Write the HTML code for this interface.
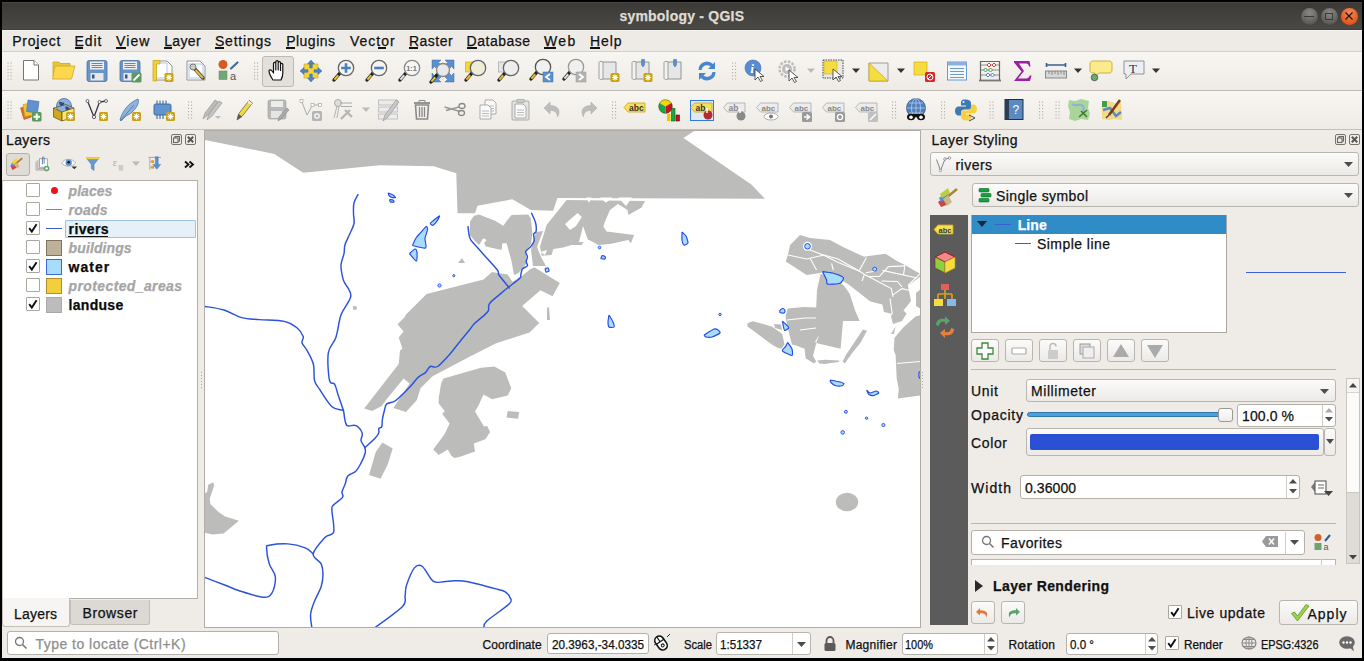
<!DOCTYPE html><html><head><meta charset="utf-8"><style>
*{margin:0;padding:0;box-sizing:border-box}
html,body{width:1364px;height:661px;overflow:hidden;background:#000}
body{position:relative;font-family:"Liberation Sans",sans-serif}
.a{position:absolute}
.t{position:absolute;white-space:nowrap;line-height:normal;font-family:"Liberation Sans",sans-serif;-webkit-text-stroke:0.25px currentColor}
svg{position:absolute;overflow:visible}
</style></head><body>
<div class="a" style="left:2px;top:2px;width:1360px;height:655px;background:#efebe7"></div>
<div class="a" style="left:2px;top:2px;width:1360px;height:28px;background:linear-gradient(#3a3935,#4c4a46)"></div>
<div class="a" style="left:2px;top:2px;width:1360px;height:1px;background:#4a4844"></div>
<div class="a" style="left:2px;top:29px;width:1360px;height:1px;background:#403e3a"></div>
<div class="t" style="left:619.4px;top:8.13px;font-size:14px;font-weight:bold;font-style:normal;color:#dfdbd2;letter-spacing:0.218px;">symbology - QGIS</div>
<div class="a" style="left:1300.5px;top:7.5px;width:17px;height:17px;border-radius:50%;background:radial-gradient(circle at 50% 30%,#8a8985,#5d5c58 70%,#4a4945);box-shadow:0 0 0 0.5px #3a3935"></div>
<div class="a" style="left:1320.5px;top:7.5px;width:17px;height:17px;border-radius:50%;background:radial-gradient(circle at 50% 30%,#8a8985,#5d5c58 70%,#4a4945);box-shadow:0 0 0 0.5px #3a3935"></div>
<div class="a" style="left:1340.5px;top:7.5px;width:17px;height:17px;border-radius:50%;background:radial-gradient(circle at 50% 30%,#f08a5d,#e3581c 70%,#d44d12);box-shadow:0 0 0 0.5px #8d3a14"></div>
<div class="a" style="left:1304px;top:15.5px;width:10px;height:1.6px;background:#3b3a36"></div>
<div class="a" style="left:1325px;top:13px;width:8px;height:6.5px;border:1.5px solid #3b3a36"></div>
<svg style="left:1343px;top:10px" width="12" height="12"><path d="M2.5 2.5L9.5 9.5M9.5 2.5L2.5 9.5" stroke="#2a1505" stroke-width="1.2"/></svg>
<div class="a" style="left:2px;top:30px;width:1360px;height:21px;background:#eeebe7"></div>
<div class="a" style="left:2px;top:30px;width:1360px;height:1px;background:#f7f5f1"></div>
<div class="a" style="left:2px;top:51px;width:1360px;height:1px;background:#d3cfc9"></div>
<div class="t" style="left:12.2px;top:32.83px;font-size:14px;font-weight:normal;font-style:normal;color:#111;letter-spacing:0.790px;">Project</div>
<div class="t" style="left:74.6px;top:32.83px;font-size:14px;font-weight:normal;font-style:normal;color:#111;letter-spacing:0.892px;">Edit</div>
<div class="t" style="left:116px;top:32.83px;font-size:14px;font-weight:normal;font-style:normal;color:#111;letter-spacing:1.102px;">View</div>
<div class="t" style="left:164.2px;top:32.83px;font-size:14px;font-weight:normal;font-style:normal;color:#111;letter-spacing:0.350px;">Layer</div>
<div class="t" style="left:215px;top:32.83px;font-size:14px;font-weight:normal;font-style:normal;color:#111;letter-spacing:0.775px;">Settings</div>
<div class="t" style="left:286.2px;top:32.83px;font-size:14px;font-weight:normal;font-style:normal;color:#111;letter-spacing:0.482px;">Plugins</div>
<div class="t" style="left:350px;top:32.83px;font-size:14px;font-weight:normal;font-style:normal;color:#111;letter-spacing:0.983px;">Vector</div>
<div class="t" style="left:409px;top:32.83px;font-size:14px;font-weight:normal;font-style:normal;color:#111;letter-spacing:0.476px;">Raster</div>
<div class="t" style="left:466.6px;top:32.83px;font-size:14px;font-weight:normal;font-style:normal;color:#111;letter-spacing:0.499px;">Database</div>
<div class="t" style="left:544px;top:32.83px;font-size:14px;font-weight:normal;font-style:normal;color:#111;letter-spacing:1.384px;">Web</div>
<div class="t" style="left:590px;top:32.83px;font-size:14px;font-weight:normal;font-style:normal;color:#111;letter-spacing:0.906px;">Help</div>
<div class="a" style="left:35.2px;top:47.2px;width:3.8px;height:1.5px;background:#111"></div>
<div class="a" style="left:75px;top:47.2px;width:8px;height:1.5px;background:#111"></div>
<div class="a" style="left:116px;top:47.2px;width:10px;height:1.5px;background:#111"></div>
<div class="a" style="left:164.2px;top:47.2px;width:8px;height:1.5px;background:#111"></div>
<div class="a" style="left:215px;top:47.2px;width:9px;height:1.5px;background:#111"></div>
<div class="a" style="left:286.2px;top:47.2px;width:9px;height:1.5px;background:#111"></div>
<div class="a" style="left:378px;top:47.2px;width:8px;height:1.5px;background:#111"></div>
<div class="a" style="left:409px;top:47.2px;width:9px;height:1.5px;background:#111"></div>
<div class="a" style="left:466.6px;top:47.2px;width:10px;height:1.5px;background:#111"></div>
<div class="a" style="left:544px;top:47.2px;width:12px;height:1.5px;background:#111"></div>
<div class="a" style="left:590px;top:47.2px;width:10px;height:1.5px;background:#111"></div>
<div class="a" style="left:2px;top:52px;width:1360px;height:38px;background:linear-gradient(#f8f6f2,#eeebe6)"></div>
<div class="a" style="left:2px;top:90px;width:1360px;height:1px;background:#bdb9b3"></div>
<div class="a" style="left:2px;top:91px;width:1360px;height:38px;background:linear-gradient(#f8f6f2,#eeebe6)"></div>
<div class="a" style="left:2px;top:129px;width:1360px;height:1px;background:#c2beb8"></div>
<div class="a" style="left:2px;top:130px;width:1360px;height:497px;background:#efebe7"></div>
<div class="a" style="left:2px;top:627px;width:1360px;height:31px;background:#efebe7"></div>
<div class="t" style="left:6px;top:132.33px;font-size:14px;font-weight:normal;font-style:normal;color:#111;letter-spacing:0.400px;">Layers</div>
<div class="a" style="left:171px;top:133.9px;width:11px;height:11px;border:1px solid #77736d;border-radius:2px"></div><svg style="left:171px;top:133.9px" width="11" height="11"><rect x="4" y="2.5" width="4.5" height="4.5" fill="none" stroke="#666" stroke-width="1.1"/><rect x="2.5" y="4" width="4.5" height="4.5" fill="#efebe7" stroke="#666" stroke-width="1.1"/></svg><div class="a" style="left:185px;top:133.9px;width:11px;height:11px;border:1px solid #77736d;border-radius:2px"></div><svg style="left:185px;top:133.9px" width="11" height="11"><path d="M2.8 2.8L8.2 8.2M8.2 2.8L2.8 8.2" stroke="#555" stroke-width="2"/></svg>
<div class="a" style="left:6px;top:153px;width:23.5px;height:22.5px;border:1px solid #b3afa9;border-radius:3px;background:#dfdcd8"></div>
<div class="a" style="left:2px;top:180px;width:196px;height:419px;background:#fff;border:1px solid #b3afa9;border-left-color:#c5c1bb"></div>
<div class="a" style="left:26px;top:183px;width:14px;height:14px;border:1px solid #aaa6a0;background:#fff;border-radius:1px"></div>
<div class="a" style="left:50.5px;top:186.5px;width:7px;height:7px;background:#e8141c;border-radius:50%"></div>
<div class="t" style="left:68.6px;top:183.13px;font-size:14px;font-weight:bold;font-style:italic;color:#a5a5a5;letter-spacing:0.028px;">places</div>
<div class="a" style="left:26px;top:202px;width:14px;height:14px;border:1px solid #aaa6a0;background:#fff;border-radius:1px"></div>
<div class="a" style="left:46px;top:208.5px;width:16px;height:1.2px;background:#e36262"></div>
<div class="t" style="left:68.6px;top:202.13px;font-size:14px;font-weight:bold;font-style:italic;color:#a5a5a5;letter-spacing:0.223px;">roads</div>
<div class="a" style="left:65.4px;top:219.5px;width:131px;height:18px;background:#e6f0f9;border:1px solid #9fc1e3;border-radius:1px"></div>
<div class="a" style="left:26px;top:221px;width:14px;height:14px;border:1px solid #aaa6a0;background:#fff;border-radius:1px"></div><svg style="left:26px;top:221px" width="14" height="14"><path d="M3.2 7.2L5.8 10.6L10.6 3.2" stroke="#111" stroke-width="1.9" fill="none"/></svg>
<div class="a" style="left:46px;top:227.5px;width:16px;height:1.3px;background:#3d5fd3"></div>
<div class="t" style="left:68.6px;top:221.13px;font-size:14px;font-weight:bold;font-style:normal;color:#0a0a0a;letter-spacing:0.372px;">rivers</div>
<div class="a" style="left:26px;top:240px;width:14px;height:14px;border:1px solid #aaa6a0;background:#fff;border-radius:1px"></div>
<div class="a" style="left:46px;top:239.5px;width:16px;height:16px;background:#bdb19a;border:1px solid #7d735f"></div>
<div class="t" style="left:68.6px;top:240.13px;font-size:14px;font-weight:bold;font-style:italic;color:#a5a5a5;letter-spacing:0.102px;">buildings</div>
<div class="a" style="left:26px;top:259px;width:14px;height:14px;border:1px solid #aaa6a0;background:#fff;border-radius:1px"></div><svg style="left:26px;top:259px" width="14" height="14"><path d="M3.2 7.2L5.8 10.6L10.6 3.2" stroke="#111" stroke-width="1.9" fill="none"/></svg>
<div class="a" style="left:46px;top:258.5px;width:16px;height:16px;background:#a8dcfb;border:1px solid #3a6ad8"></div>
<div class="t" style="left:68.6px;top:259.13px;font-size:14px;font-weight:bold;font-style:normal;color:#0a0a0a;letter-spacing:0.984px;">water</div>
<div class="a" style="left:26px;top:278px;width:14px;height:14px;border:1px solid #aaa6a0;background:#fff;border-radius:1px"></div>
<div class="a" style="left:46px;top:277.5px;width:16px;height:16px;background:#f3cf3b;border:1px solid #b1902a"></div>
<div class="t" style="left:68.6px;top:278.13px;font-size:14px;font-weight:bold;font-style:italic;color:#a5a5a5;letter-spacing:0.378px;">protected_areas</div>
<div class="a" style="left:26px;top:297px;width:14px;height:14px;border:1px solid #aaa6a0;background:#fff;border-radius:1px"></div><svg style="left:26px;top:297px" width="14" height="14"><path d="M3.2 7.2L5.8 10.6L10.6 3.2" stroke="#111" stroke-width="1.9" fill="none"/></svg>
<div class="a" style="left:46px;top:296.5px;width:16px;height:16px;background:#bbbcbb;border:1px solid #a9aaa9"></div>
<div class="t" style="left:68.6px;top:297.13px;font-size:14px;font-weight:bold;font-style:normal;color:#0a0a0a;letter-spacing:0.288px;">landuse</div>
<div class="a" style="left:68.3px;top:235.5px;width:40px;height:1.4px;background:#111"></div>
<div class="a" style="left:2px;top:598px;width:68px;height:29px;background:#f6f5f3;border:1px solid #c2beb8;border-top:none;border-radius:0 0 3px 3px"></div>
<div class="t" style="left:14px;top:605.83px;font-size:14px;font-weight:normal;font-style:normal;color:#111;letter-spacing:0.200px;">Layers</div>
<div class="a" style="left:70px;top:599.5px;width:80px;height:25px;background:#dcd9d5;border:1px solid #c2beb8;border-top:none;border-radius:0 0 3px 3px"></div>
<div class="t" style="left:82.5px;top:605.33px;font-size:14px;font-weight:normal;font-style:normal;color:#111;letter-spacing:0.612px;">Browser</div>
<div class="a" style="left:920px;top:130px;width:1px;height:497px;background:#b3afa9"></div>
<div class="t" style="left:931.6px;top:132.03px;font-size:14px;font-weight:normal;font-style:normal;color:#111;letter-spacing:0.424px;">Layer Styling</div>
<div class="a" style="left:1335.4px;top:133.9px;width:11px;height:11px;border:1px solid #77736d;border-radius:2px"></div><svg style="left:1335.4px;top:133.9px" width="11" height="11"><rect x="4" y="2.5" width="4.5" height="4.5" fill="none" stroke="#666" stroke-width="1.1"/><rect x="2.5" y="4" width="4.5" height="4.5" fill="#efebe7" stroke="#666" stroke-width="1.1"/></svg><div class="a" style="left:1349.4px;top:133.9px;width:11px;height:11px;border:1px solid #77736d;border-radius:2px"></div><svg style="left:1349.4px;top:133.9px" width="11" height="11"><path d="M2.8 2.8L8.2 8.2M8.2 2.8L2.8 8.2" stroke="#555" stroke-width="2"/></svg>
<div class="a" style="left:930px;top:152.2px;width:429px;height:24.2px;border:1px solid #b9b5af;border-radius:3px;background:linear-gradient(#fbfbfa,#eceae7);"></div>
<div class="t" style="left:955.5px;top:157.13px;font-size:14px;font-weight:normal;font-style:normal;color:#111;letter-spacing:0.459px;">rivers</div>
<svg style="left:935px;top:156px" width="17" height="17"><path d="M1.5 3.5L5.5 14.5L10 3L14.5 2" fill="none" stroke="#777" stroke-width="0.9"/><circle cx="10" cy="3" r="1.3" fill="#fff" stroke="#777" stroke-width="0.7"/><circle cx="14.5" cy="2" r="1.3" fill="#fff" stroke="#777" stroke-width="0.7"/><circle cx="5.5" cy="14.5" r="1.2" fill="#fff" stroke="#777" stroke-width="0.7"/></svg>
<svg style="left:1343.5px;top:162.0px" width="9" height="5"><path d="M0 0H9L4.5 5Z" fill="#4d4d4d"/></svg>
<div class="a" style="left:971.6px;top:183.3px;width:387.4px;height:24.2px;border:1px solid #b9b5af;border-radius:3px;background:linear-gradient(#fbfbfa,#eceae7);"></div>
<div class="t" style="left:996px;top:187.83px;font-size:14px;font-weight:normal;font-style:normal;color:#111;letter-spacing:0.406px;">Single symbol</div>
<svg style="left:978px;top:188px" width="14" height="15"><rect x="1" y="0.5" width="10" height="3.5" rx="0.8" fill="#18a040" stroke="#0b6a28" stroke-width="0.6"/><rect x="3" y="5.5" width="10" height="3.5" rx="0.8" fill="#18a040" stroke="#0b6a28" stroke-width="0.6"/><rect x="1" y="10.5" width="10" height="3.5" rx="0.8" fill="#18a040" stroke="#0b6a28" stroke-width="0.6"/></svg>
<svg style="left:1343.5px;top:193.0px" width="9" height="5"><path d="M0 0H9L4.5 5Z" fill="#4d4d4d"/></svg>
<div class="a" style="left:930px;top:215px;width:38px;height:409.5px;background:#5b5b5b"></div>
<div class="a" style="left:971.4px;top:215px;width:256px;height:118px;background:#fff;border:1px solid #aba7a1"></div>
<div class="a" style="left:972.4px;top:214.8px;width:254px;height:19.2px;background:#308cc6"></div>
<svg style="left:977px;top:221px" width="10" height="7"><path d="M0 0H10L5 6Z" fill="#15283a"/></svg>
<div class="a" style="left:995px;top:223.8px;width:16px;height:1.2px;background:#3d5fd3"></div>
<div class="t" style="left:1017.7px;top:216.83px;font-size:14px;font-weight:bold;font-style:normal;color:#fff;letter-spacing:0.078px;">Line</div>
<div class="a" style="left:1015px;top:243px;width:16px;height:1.3px;background:#3d5fd3"></div>
<div class="t" style="left:1037px;top:235.83px;font-size:14px;font-weight:normal;font-style:normal;color:#111;letter-spacing:0.455px;">Simple line</div>
<div class="a" style="left:1246px;top:272px;width:100px;height:1.4px;background:#3d5fd3"></div>
<div class="a" style="left:971.2px;top:339.2px;width:28px;height:23.2px;border:1px solid #b9b5af;border-radius:3px;background:linear-gradient(#fbfbfa,#eceae7);"></div>
<div class="a" style="left:1005.2px;top:339.2px;width:28px;height:23.2px;border:1px solid #b9b5af;border-radius:3px;background:linear-gradient(#fbfbfa,#eceae7);"></div>
<div class="a" style="left:1039.2px;top:339.2px;width:28px;height:23.2px;border:1px solid #b9b5af;border-radius:3px;background:linear-gradient(#fbfbfa,#eceae7);"></div>
<div class="a" style="left:1073.2px;top:339.2px;width:28px;height:23.2px;border:1px solid #b9b5af;border-radius:3px;background:linear-gradient(#fbfbfa,#eceae7);"></div>
<div class="a" style="left:1107.2px;top:339.2px;width:28px;height:23.2px;border:1px solid #b9b5af;border-radius:3px;background:linear-gradient(#fbfbfa,#eceae7);"></div>
<div class="a" style="left:1141.2px;top:339.2px;width:28px;height:23.2px;border:1px solid #b9b5af;border-radius:3px;background:linear-gradient(#fbfbfa,#eceae7);"></div>
<div class="a" style="left:971px;top:369px;width:365px;height:1px;background:#b9b5af"></div>
<div class="t" style="left:971px;top:383.33px;font-size:14px;font-weight:normal;font-style:normal;color:#111;letter-spacing:0.703px;">Unit</div>
<div class="a" style="left:1025.5px;top:378.5px;width:310px;height:23.7px;border:1px solid #b9b5af;border-radius:3px;background:linear-gradient(#fbfbfa,#eceae7);"></div>
<div class="t" style="left:1031px;top:383.33px;font-size:14px;font-weight:normal;font-style:normal;color:#111;letter-spacing:0.571px;">Millimeter</div>
<svg style="left:1320.0px;top:388.5px" width="9" height="5"><path d="M0 0H9L4.5 5Z" fill="#4d4d4d"/></svg>
<div class="t" style="left:971px;top:407.33px;font-size:14px;font-weight:normal;font-style:normal;color:#111;letter-spacing:0.758px;">Opacity</div>
<div class="a" style="left:1027px;top:412.3px;width:198px;height:5px;background:#4ca0d9;border:1px solid #3377aa;border-radius:3px"></div>
<div class="a" style="left:1217.5px;top:407.5px;width:15px;height:14px;background:linear-gradient(#fff,#ececec);border:1px solid #9c9893;border-radius:3px"></div>
<div class="a" style="left:1236.5px;top:404.3px;width:99px;height:22.3px;border:1px solid #b4b0aa;border-radius:3px;background:#fff;"></div>
<div class="t" style="left:1242px;top:407.83px;font-size:14px;font-weight:normal;font-style:normal;color:#111;letter-spacing:0.107px;">100.0 %</div>
<div class="a" style="left:1321.5px;top:405.3px;width:1px;height:20.3px;background:#d0ccc6"></div>
<svg style="left:1324.5px;top:408.25px" width="8" height="4.5"><path d="M0 4.5H8L4.0 0Z" fill="#aaa"/></svg>
<svg style="left:1324.5px;top:417.25px" width="8" height="4.5"><path d="M0 0H8L4.0 4.5Z" fill="#4d4d4d"/></svg>
<div class="t" style="left:971px;top:435.33px;font-size:14px;font-weight:normal;font-style:normal;color:#111;letter-spacing:0.641px;">Color</div>
<div class="a" style="left:1025.5px;top:428.3px;width:298px;height:27.5px;border:1px solid #b9b5af;border-radius:3px;background:linear-gradient(#fbfbfa,#eceae7);"></div>
<div class="a" style="left:1030px;top:433.6px;width:289px;height:16.4px;background:#2b50d3;border-radius:2px"></div>
<div class="a" style="left:1324px;top:428.3px;width:11.5px;height:27.5px;border:1px solid #b9b5af;border-radius:3px;background:linear-gradient(#fbfbfa,#eceae7);"></div>
<svg style="left:1325.5px;top:439.0px" width="8" height="5"><path d="M0 0H8L4.0 5Z" fill="#4d4d4d"/></svg>
<div class="t" style="left:971px;top:480.33px;font-size:14px;font-weight:normal;font-style:normal;color:#111;letter-spacing:1.055px;">Width</div>
<div class="a" style="left:1019.5px;top:475.3px;width:280px;height:23.3px;border:1px solid #b4b0aa;border-radius:3px;background:#fff;"></div>
<div class="t" style="left:1025px;top:480.33px;font-size:14px;font-weight:normal;font-style:normal;color:#111;letter-spacing:0.070px;">0.36000</div>
<div class="a" style="left:1285.5px;top:476.3px;width:1px;height:21.3px;background:#d0ccc6"></div>
<svg style="left:1288.5px;top:479.25px" width="8" height="4.5"><path d="M0 4.5H8L4.0 0Z" fill="#4d4d4d"/></svg>
<svg style="left:1288.5px;top:489.25px" width="8" height="4.5"><path d="M0 0H8L4.0 4.5Z" fill="#4d4d4d"/></svg>
<svg style="left:1309px;top:478px" width="26" height="20"><path d="M2 9L6 4V14Z" fill="#777"/><rect x="6" y="3" width="11" height="13" fill="#fff" stroke="#666" stroke-width="1.2"/><path d="M9 7H15M9 10H15" stroke="#666" stroke-width="1.2"/><path d="M15 13H24L19.5 18Z" fill="#444"/></svg>
<div class="a" style="left:1345.5px;top:378px;width:14px;height:186px;background:#dfdcd8;border:1px solid #c9c5bf"></div>
<div class="a" style="left:1346.5px;top:379px;width:12px;height:14px;background:#f6f5f3"></div>
<div class="a" style="left:1346.5px;top:392px;width:12px;height:101px;background:#fbfbfa;border-top:1px solid #d8d4ce;border-bottom:1px solid #c9c5bf"></div>
<svg style="left:1348.5px;top:382.75px" width="8" height="4.5"><path d="M0 4.5H8L4.0 0Z" fill="#444"/></svg>
<svg style="left:1348.5px;top:554.75px" width="8" height="4.5"><path d="M0 0H8L4.0 4.5Z" fill="#444"/></svg>
<div class="a" style="left:971px;top:522.8px;width:365px;height:1px;background:#b9b5af"></div>
<div class="a" style="left:971px;top:530px;width:334.2px;height:24.5px;border:1px solid #b4b0aa;border-radius:3px;background:#fff;"></div>
<svg style="left:981px;top:535px" width="14" height="14"><circle cx="5.5" cy="5.5" r="4" fill="none" stroke="#777" stroke-width="1.3"/><path d="M8.5 8.5L12.5 12.5" stroke="#777" stroke-width="1.6"/></svg>
<div class="t" style="left:1001px;top:534.83px;font-size:14px;font-weight:normal;font-style:normal;color:#111;letter-spacing:0.432px;">Favorites</div>
<svg style="left:1262px;top:536px" width="16" height="11"><path d="M0 5.5L4 0H16V11H4Z" fill="#9a9a9a"/><path d="M7 2.5L12 8.5M12 2.5L7 8.5" stroke="#fff" stroke-width="1.4"/></svg>
<div class="a" style="left:1285.2px;top:531.5px;width:1px;height:22px;background:#d0ccc6"></div>
<svg style="left:1290.0px;top:540.0px" width="9" height="5"><path d="M0 0H9L4.5 5Z" fill="#4d4d4d"/></svg>
<svg style="left:1313px;top:533px" width="20" height="20"><circle cx="5" cy="4.5" r="3.5" fill="#d0622a"/><rect x="1.5" y="10" width="7" height="7" fill="#6fa372"/><path d="M12 8L17 2" stroke="#2e5d96" stroke-width="2"/><text x="10.5" y="17" font-size="9" fill="#555" font-family="Liberation Sans">a</text></svg>
<div class="a" style="left:971px;top:559px;width:365px;height:6px;background:#fff;border:1px solid #b9b5af;border-bottom:none"></div>
<div class="a" style="left:1321px;top:559px;width:1px;height:6px;background:#ccc"></div>
<svg style="left:975px;top:579.5px" width="9" height="12"><path d="M0 0L8 6L0 12Z" fill="#2a2a2a"/></svg>
<div class="t" style="left:993px;top:578.33px;font-size:14px;font-weight:bold;font-style:normal;color:#111;letter-spacing:0.397px;">Layer Rendering</div>
<div class="a" style="left:971px;top:601px;width:23.5px;height:22.5px;border:1px solid #b9b5af;border-radius:3px;background:linear-gradient(#fbfbfa,#eceae7);"></div>
<svg style="left:975px;top:605px" width="16" height="15"><path d="M5 3L1 7L5 10.5V8.2C9 7.8 11 9 11.5 12.5C13.5 8 11.5 5 5 5.2Z" fill="#e07a3a"/></svg>
<div class="a" style="left:1001px;top:601px;width:23.5px;height:22.5px;border:1px solid #b9b5af;border-radius:3px;background:linear-gradient(#fbfbfa,#eceae7);"></div>
<svg style="left:1005px;top:605px" width="16" height="15"><path d="M11 3L15 7L11 10.5V8.2C7 7.8 5 9 4.5 12.5C2.5 8 4.5 5 11 5.2Z" fill="#5aa36a"/></svg>
<div class="a" style="left:1168.2px;top:605.3px;width:14px;height:14px;border:1px solid #aaa6a0;background:#fff;border-radius:1px"></div><svg style="left:1168.2px;top:605.3px" width="14" height="14"><path d="M3.2 7.2L5.8 10.6L10.6 3.2" stroke="#111" stroke-width="1.9" fill="none"/></svg>
<div class="t" style="left:1187px;top:605.13px;font-size:14px;font-weight:normal;font-style:normal;color:#111;letter-spacing:0.564px;">Live update</div>
<div class="a" style="left:1279.3px;top:600.3px;width:79px;height:24.8px;border:1px solid #b9b5af;border-radius:3px;background:linear-gradient(#fbfbfa,#eceae7);"></div>
<svg style="left:1290px;top:603px" width="20" height="19"><path d="M1.5 10.5L4.5 9L7.5 13L16 1.5L19 3L7.5 18Z" fill="#9fd04a" stroke="#5a9a2a" stroke-width="0.8"/></svg>
<div class="t" style="left:1307.5px;top:605.63px;font-size:14px;font-weight:normal;font-style:normal;color:#111;letter-spacing:0.996px;">Apply</div>
<div class="a" style="left:200.8px;top:372px;width:1.2px;height:1.2px;background:#9a9690;border-radius:50%"></div>
<div class="a" style="left:921.8px;top:372px;width:1.2px;height:1.2px;background:#9a9690;border-radius:50%"></div>
<div class="a" style="left:200.8px;top:375px;width:1.2px;height:1.2px;background:#9a9690;border-radius:50%"></div>
<div class="a" style="left:921.8px;top:375px;width:1.2px;height:1.2px;background:#9a9690;border-radius:50%"></div>
<div class="a" style="left:200.8px;top:378px;width:1.2px;height:1.2px;background:#9a9690;border-radius:50%"></div>
<div class="a" style="left:921.8px;top:378px;width:1.2px;height:1.2px;background:#9a9690;border-radius:50%"></div>
<div class="a" style="left:200.8px;top:381px;width:1.2px;height:1.2px;background:#9a9690;border-radius:50%"></div>
<div class="a" style="left:921.8px;top:381px;width:1.2px;height:1.2px;background:#9a9690;border-radius:50%"></div>
<div class="a" style="left:200.8px;top:384px;width:1.2px;height:1.2px;background:#9a9690;border-radius:50%"></div>
<div class="a" style="left:921.8px;top:384px;width:1.2px;height:1.2px;background:#9a9690;border-radius:50%"></div>
<div class="a" style="left:200.8px;top:387px;width:1.2px;height:1.2px;background:#9a9690;border-radius:50%"></div>
<div class="a" style="left:921.8px;top:387px;width:1.2px;height:1.2px;background:#9a9690;border-radius:50%"></div>
<div class="a" style="left:6.6px;top:631.4px;width:272px;height:24px;border:1px solid #b4b0aa;border-radius:3px;background:#fff;"></div>
<svg style="left:14px;top:636px" width="14" height="14"><circle cx="5.5" cy="5.5" r="4" fill="none" stroke="#777" stroke-width="1.3"/><path d="M8.5 8.5L12.5 12.5" stroke="#777" stroke-width="1.6"/></svg>
<div class="t" style="left:35.5px;top:635.83px;font-size:14px;font-weight:normal;font-style:normal;color:#8e8e8e;letter-spacing:0.472px;">Type to locate (Ctrl+K)</div>
<div class="t" style="left:482.6px;top:637.94px;font-size:12px;font-weight:normal;font-style:normal;color:#111;letter-spacing:0.033px;">Coordinate</div>
<div class="a" style="left:546.7px;top:632.6px;width:102.3px;height:21.4px;border:1px solid #b4b0aa;border-radius:3px;background:#fff;"></div>
<div class="t" style="left:551.5px;top:637.94px;font-size:12px;font-weight:normal;font-style:normal;color:#111;letter-spacing:0.000px;transform:scaleX(0.9782);transform-origin:0 0;">20.3963,-34.0335</div>
<svg style="left:652px;top:633px" width="20" height="20"><g transform="rotate(-35 9 10)"><rect x="4.5" y="2.5" width="9" height="15" rx="4.5" fill="#fff" stroke="#111" stroke-width="1.6"/><path d="M9 3V8M4.5 8.5H13.5" stroke="#111" stroke-width="1.2"/><circle cx="9" cy="13" r="1.5" fill="none" stroke="#111" stroke-width="1"/></g><path d="M15 4L18 1M2 12L4 11" stroke="#333" stroke-width="1"/></svg>
<div class="t" style="left:683.5px;top:637.94px;font-size:12px;font-weight:normal;font-style:normal;color:#111;letter-spacing:0.000px;transform:scaleX(0.9328);transform-origin:0 0;">Scale</div>
<div class="a" style="left:715.5px;top:632.2px;width:95.8px;height:22.8px;border:1px solid #b9b5af;border-radius:3px;background:linear-gradient(#fbfbfa,#eceae7);background:#fff"></div>
<div class="a" style="left:791.6px;top:633.2px;width:1px;height:20.8px;background:#d0ccc6"></div>
<div class="t" style="left:720px;top:637.94px;font-size:12px;font-weight:normal;font-style:normal;color:#111;letter-spacing:0.000px;transform:scaleX(0.9686);transform-origin:0 0;">1:51337</div>
<svg style="left:796.5px;top:641.5px" width="9" height="5"><path d="M0 0H9L4.5 5Z" fill="#4d4d4d"/></svg>
<svg style="left:823px;top:635px" width="14" height="17"><path d="M3.5 8V5.5A3.5 3.5 0 0 1 10.5 5.5V8" fill="none" stroke="#5a5a5a" stroke-width="1.8"/><rect x="1.5" y="8" width="11" height="8" rx="1.5" fill="#5a5a5a"/></svg>
<div class="t" style="left:845.4px;top:637.94px;font-size:12px;font-weight:normal;font-style:normal;color:#111;letter-spacing:0.280px;">Magnifier</div>
<div class="a" style="left:901.5px;top:632.6px;width:96.8px;height:22px;border:1px solid #b4b0aa;border-radius:3px;background:#fff;"></div>
<div class="t" style="left:905px;top:637.94px;font-size:12px;font-weight:normal;font-style:normal;color:#111;letter-spacing:0.000px;transform:scaleX(0.9124);transform-origin:0 0;">100%</div>
<div class="a" style="left:984.3px;top:633.6px;width:1px;height:20px;background:#d0ccc6"></div>
<svg style="left:987.0px;top:636.75px" width="8" height="4.5"><path d="M0 4.5H8L4.0 0Z" fill="#4d4d4d"/></svg>
<svg style="left:987.0px;top:645.75px" width="8" height="4.5"><path d="M0 0H8L4.0 4.5Z" fill="#4d4d4d"/></svg>
<div class="t" style="left:1008.4px;top:637.94px;font-size:12px;font-weight:normal;font-style:normal;color:#111;letter-spacing:0.273px;">Rotation</div>
<div class="a" style="left:1065.7px;top:632.6px;width:92.3px;height:22px;border:1px solid #b4b0aa;border-radius:3px;background:#fff;"></div>
<div class="t" style="left:1070px;top:637.64px;font-size:12px;font-weight:normal;font-style:normal;color:#111;letter-spacing:0.000px;transform:scaleX(0.9679);transform-origin:0 0;">0.0 °</div>
<div class="a" style="left:1144.6px;top:633.6px;width:1px;height:20px;background:#d0ccc6"></div>
<svg style="left:1147.5px;top:636.75px" width="8" height="4.5"><path d="M0 4.5H8L4.0 0Z" fill="#4d4d4d"/></svg>
<svg style="left:1147.5px;top:645.75px" width="8" height="4.5"><path d="M0 0H8L4.0 4.5Z" fill="#4d4d4d"/></svg>
<div class="a" style="left:1165.2px;top:636.2px;width:14px;height:14px;border:1px solid #aaa6a0;background:#fff;border-radius:1px"></div><svg style="left:1165.2px;top:636.2px" width="14" height="14"><path d="M3.2 7.2L5.8 10.6L10.6 3.2" stroke="#111" stroke-width="1.9" fill="none"/></svg>
<div class="t" style="left:1184.4px;top:637.64px;font-size:12px;font-weight:normal;font-style:normal;color:#111;letter-spacing:0.000px;transform:scaleX(0.9807);transform-origin:0 0;">Render</div>
<svg style="left:1241px;top:636px" width="16" height="14"><ellipse cx="8" cy="7" rx="7" ry="6" fill="none" stroke="#8a8a8a" stroke-width="1.2"/><path d="M1 7H15M8 1V13M3 3.5H13M3 10.5H13" stroke="#8a8a8a" stroke-width="1"/><ellipse cx="8" cy="7" rx="3" ry="6" fill="none" stroke="#8a8a8a" stroke-width="1"/></svg>
<div class="t" style="left:1261.4px;top:637.64px;font-size:12px;font-weight:normal;font-style:normal;color:#111;letter-spacing:0.000px;transform:scaleX(0.9062);transform-origin:0 0;">EPSG:4326</div>
<svg style="left:1339px;top:636px" width="17" height="16"><ellipse cx="8" cy="6.5" rx="7.8" ry="6.3" fill="#6a6a6a"/><path d="M10 11L15 15.5L13.5 9Z" fill="#6a6a6a"/><circle cx="4.5" cy="6.5" r="1.2" fill="#fff"/><circle cx="8" cy="6.5" r="1.2" fill="#fff"/><circle cx="11.5" cy="6.5" r="1.2" fill="#fff"/></svg>
<svg style="left:0;top:0" width="1364" height="140"><rect x="7.5" y="62.5" width="1.1" height="1.1" fill="#aeaaa4"/><rect x="10.5" y="62.5" width="1.1" height="1.1" fill="#aeaaa4"/><rect x="7.5" y="65.7" width="1.1" height="1.1" fill="#aeaaa4"/><rect x="10.5" y="65.7" width="1.1" height="1.1" fill="#aeaaa4"/><rect x="7.5" y="68.9" width="1.1" height="1.1" fill="#aeaaa4"/><rect x="10.5" y="68.9" width="1.1" height="1.1" fill="#aeaaa4"/><rect x="7.5" y="72.1" width="1.1" height="1.1" fill="#aeaaa4"/><rect x="10.5" y="72.1" width="1.1" height="1.1" fill="#aeaaa4"/><rect x="7.5" y="75.3" width="1.1" height="1.1" fill="#aeaaa4"/><rect x="10.5" y="75.3" width="1.1" height="1.1" fill="#aeaaa4"/><rect x="7.5" y="78.5" width="1.1" height="1.1" fill="#aeaaa4"/><rect x="10.5" y="78.5" width="1.1" height="1.1" fill="#aeaaa4"/></svg>
<svg style="left:0;top:0" width="1364" height="140"><rect x="7.5" y="101.5" width="1.1" height="1.1" fill="#aeaaa4"/><rect x="10.5" y="101.5" width="1.1" height="1.1" fill="#aeaaa4"/><rect x="7.5" y="104.7" width="1.1" height="1.1" fill="#aeaaa4"/><rect x="10.5" y="104.7" width="1.1" height="1.1" fill="#aeaaa4"/><rect x="7.5" y="107.9" width="1.1" height="1.1" fill="#aeaaa4"/><rect x="10.5" y="107.9" width="1.1" height="1.1" fill="#aeaaa4"/><rect x="7.5" y="111.1" width="1.1" height="1.1" fill="#aeaaa4"/><rect x="10.5" y="111.1" width="1.1" height="1.1" fill="#aeaaa4"/><rect x="7.5" y="114.3" width="1.1" height="1.1" fill="#aeaaa4"/><rect x="10.5" y="114.3" width="1.1" height="1.1" fill="#aeaaa4"/><rect x="7.5" y="117.5" width="1.1" height="1.1" fill="#aeaaa4"/><rect x="10.5" y="117.5" width="1.1" height="1.1" fill="#aeaaa4"/></svg>
<svg style="left:19.0px;top:59.0px" width="24.0" height="24.0" viewBox="0 0 24 24"><path d="M0.5 1.5H11L15.5 6V21H0.5Z" transform="translate(4 0)" fill="#fff" stroke="#747474" stroke-width="1"/><path d="M15 1.5V6H19.5" fill="#fff" stroke="#747474" stroke-width="1"/></svg>
<svg style="left:52.0px;top:59.0px" width="24.0" height="24.0" viewBox="0 0 24 24"><path d="M1 3H7L8 4.5H18V17H1Z" fill="#e8c63a" stroke="#c8a62a" stroke-width="0.8"/><path d="M3 7H23L19.5 20H0.5Z" fill="#fdd84e" stroke="#c9a82c" stroke-width="0.8"/></svg>
<svg style="left:85.0px;top:59.0px" width="24.0" height="24.0" viewBox="0 0 24 24"><rect x="2" y="1.5" width="20" height="21" rx="2" fill="#6895c9" stroke="#4a72a3" stroke-width="0.8"/><rect x="5" y="2.5" width="14" height="8" fill="#eee"/><path d="M6.5 4.5H17.5M6.5 6.5H17.5M6.5 8.5H17.5" stroke="#666" stroke-width="0.8"/><rect x="5.5" y="14" width="13" height="7.5" fill="#e8e8e8"/><rect x="7" y="15.5" width="2.5" height="4" fill="#3a5a85"/></svg>
<svg style="left:118.0px;top:59.0px" width="24.0" height="24.0" viewBox="0 0 24 24"><rect x="2" y="1.5" width="20" height="21" rx="2" fill="#6895c9" stroke="#4a72a3" stroke-width="0.8"/><rect x="5" y="2.5" width="14" height="8" fill="#eee"/><path d="M6.5 4.5H17.5M6.5 6.5H17.5M6.5 8.5H17.5" stroke="#666" stroke-width="0.8"/><rect x="5.5" y="14" width="13" height="7.5" fill="#e8e8e8"/><rect x="7" y="15.5" width="2.5" height="4" fill="#3a5a85"/><rect x="13.5" y="13.5" width="10" height="10" rx="1.5" fill="#5a9a5e"/><path d="M15.5 21.5L21.5 15.5" stroke="#fff" stroke-width="1.8"/></svg>
<svg style="left:151.0px;top:59.0px" width="24.0" height="24.0" viewBox="0 0 24 24"><path d="M3 2H16L21 7V21H3Z" fill="#fff" stroke="#888" stroke-width="0.9"/><rect x="5" y="4" width="11" height="15" fill="none" stroke="#9ab8e8" stroke-width="0.8"/><path d="M2 1.5H9V5H5.5V22H2Z" fill="#f0cf3a" stroke="#c9a313" stroke-width="0.7"/><rect x="13.5" y="14" width="9" height="9" rx="1.5" fill="#c9a313"/><path d="M18.0 15.5V21.5M15.0 18.5H21.0M15.9 16.4L20.1 20.6M20.1 16.4L15.9 20.6" stroke="#fff" stroke-width="1.1"/></svg>
<svg style="left:184.0px;top:59.0px" width="24.0" height="24.0" viewBox="0 0 24 24"><path d="M3 2H16L21 7V21H3Z" fill="#fff" stroke="#888" stroke-width="0.9"/><rect x="5" y="5" width="14" height="14" fill="none" stroke="#9ab8e8" stroke-width="0.8"/><path d="M10 9L19 19" stroke="#444" stroke-width="3.5" stroke-linecap="round"/><path d="M11.5 11L19 19" stroke="#e2c047" stroke-width="2"/><circle cx="9" cy="8" r="3" fill="#ccc" stroke="#666" stroke-width="0.8"/></svg>
<svg style="left:217.0px;top:59.0px" width="24.0" height="24.0" viewBox="0 0 24 24"><circle cx="6" cy="5.5" r="4.5" fill="#d45a24"/><rect x="2" y="12" width="8" height="8.5" fill="#72a777" stroke="#5a8a5e" stroke-width="0.5"/><path d="M14 9.5L20.5 3.5" stroke="#3f6aa6" stroke-width="2.2" stroke-linecap="round"/><text x="13" y="20.5" font-size="11" font-family="Liberation Sans" fill="#555">a</text></svg>
<svg style="left:0;top:0" width="1364" height="140"><rect x="254" y="62.5" width="1.1" height="1.1" fill="#aeaaa4"/><rect x="257" y="62.5" width="1.1" height="1.1" fill="#aeaaa4"/><rect x="254" y="65.7" width="1.1" height="1.1" fill="#aeaaa4"/><rect x="257" y="65.7" width="1.1" height="1.1" fill="#aeaaa4"/><rect x="254" y="68.9" width="1.1" height="1.1" fill="#aeaaa4"/><rect x="257" y="68.9" width="1.1" height="1.1" fill="#aeaaa4"/><rect x="254" y="72.1" width="1.1" height="1.1" fill="#aeaaa4"/><rect x="257" y="72.1" width="1.1" height="1.1" fill="#aeaaa4"/><rect x="254" y="75.3" width="1.1" height="1.1" fill="#aeaaa4"/><rect x="257" y="75.3" width="1.1" height="1.1" fill="#aeaaa4"/><rect x="254" y="78.5" width="1.1" height="1.1" fill="#aeaaa4"/><rect x="257" y="78.5" width="1.1" height="1.1" fill="#aeaaa4"/></svg>
<div class="a" style="left:262px;top:56px;width:32px;height:31px;border:1px solid #bdb9b3;border-radius:3px;background:#e3e0dc"></div>
<svg style="left:266.0px;top:59.0px" width="24.0" height="24.0" viewBox="0 0 24 24"><path d="M7 21C5 18 3 14 3 12C3 10.5 4.8 10.5 6 12L7.5 14V4.5C7.5 3 9.8 3 9.8 4.5V11V2.8C9.8 1.2 12.2 1.2 12.2 2.8V11V3.8C12.2 2.3 14.5 2.3 14.5 3.8V11.5V5.5C14.5 4 16.8 4 16.8 5.5V14C16.8 17 16 19 15 21Z" fill="#fff" stroke="#111" stroke-width="1.2" stroke-linejoin="round"/></svg>
<svg style="left:299.0px;top:59.0px" width="24.0" height="24.0" viewBox="0 0 24 24"><rect x="5" y="5" width="14" height="14" fill="#f5d53a" stroke="#c9a313" stroke-width="0.6"/><path d="M12 1L15.5 5H13.3V9H10.7V5H8.5ZM12 23L8.5 19H10.7V15H13.3V19H15.5ZM1 12L5 8.5V10.7H9V13.3H5V15.5ZM23 12L19 15.5V13.3H15V10.7H19V8.5Z" fill="#4f82c2" stroke="#3a6aa6" stroke-width="0.5"/></svg>
<svg style="left:332.0px;top:59.0px" width="24.0" height="24.0" viewBox="0 0 24 24"><path d="M8 14L2 21" stroke="#222" stroke-width="3.4" stroke-linecap="round"/><path d="M6.2 16.2L2.4000000000000004 20.6" stroke="#e8c22a" stroke-width="2.1"/><circle cx="14" cy="9" r="7.67" fill="#f4f4f2" stroke="#666" stroke-width="1.3"/><path d="M14 4.2V13.8M9.2 9H18.8" stroke="#4b7fc0" stroke-width="2.6"/></svg>
<svg style="left:365.0px;top:59.0px" width="24.0" height="24.0" viewBox="0 0 24 24"><path d="M8 14L2 21" stroke="#222" stroke-width="3.4" stroke-linecap="round"/><path d="M6.2 16.2L2.4000000000000004 20.6" stroke="#e8c22a" stroke-width="2.1"/><circle cx="14" cy="9" r="7.67" fill="#f4f4f2" stroke="#666" stroke-width="1.3"/><path d="M9.2 9H18.8" stroke="#4b7fc0" stroke-width="2.6"/></svg>
<svg style="left:398.0px;top:59.0px" width="24.0" height="24.0" viewBox="0 0 24 24"><path d="M8 14L2 21" stroke="#222" stroke-width="3.4" stroke-linecap="round"/><path d="M6.2 16.2L2.4000000000000004 20.6" stroke="#e4e4e4" stroke-width="2.1"/><circle cx="14" cy="9" r="7.67" fill="#f6f6f6" stroke="#888" stroke-width="1.3"/><text x="8.2" y="12" font-size="7.5" font-weight="bold" font-family="Liberation Sans" fill="#777">1:1</text></svg>
<svg style="left:431.0px;top:59.0px" width="24.0" height="24.0" viewBox="0 0 24 24"><path d="M1 1H10L7.5 3.5L11 7L7 11L3.5 7.5L1 10ZM23 1V10L20.5 7.5L17 11L13 7L16.5 3.5L14 1ZM1 23V14L3.5 16.5L7 13L11 17L7.5 20.5L10 23ZM23 23H14L16.5 20.5L13 17L17 13L20.5 16.5L23 14Z" fill="#5b8fce" stroke="#3f6fae" stroke-width="0.5"/><path d="M6 16L0 23" stroke="#222" stroke-width="3.4" stroke-linecap="round"/><path d="M4.2 18.2L0.40000000000000036 22.6" stroke="#e8c22a" stroke-width="2.1"/><circle cx="12" cy="11" r="6.489999999999999" fill="#e9e9e9" stroke="#888" stroke-width="1.3"/></svg>
<svg style="left:464.0px;top:59.0px" width="24.0" height="24.0" viewBox="0 0 24 24"><rect x="1.5" y="3" width="9" height="10" fill="#f5d53a" stroke="#c9a313" stroke-width="0.6"/><path d="M8 14L2 21" stroke="#222" stroke-width="3.4" stroke-linecap="round"/><path d="M6.2 16.2L2.4000000000000004 20.6" stroke="#e8c22a" stroke-width="2.1"/><circle cx="14" cy="9" r="7.67" fill="#eeeed8" stroke="#666" stroke-width="1.3"/></svg>
<svg style="left:497.0px;top:59.0px" width="24.0" height="24.0" viewBox="0 0 24 24"><rect x="1.5" y="3" width="9" height="10" fill="#e5e5e5" stroke="#999" stroke-width="0.6"/><path d="M8 14L2 21" stroke="#222" stroke-width="3.4" stroke-linecap="round"/><path d="M6.2 16.2L2.4000000000000004 20.6" stroke="#e8c22a" stroke-width="2.1"/><circle cx="14" cy="9" r="7.67" fill="#ededed" stroke="#666" stroke-width="1.3"/></svg>
<svg style="left:530.0px;top:59.0px" width="24.0" height="24.0" viewBox="0 0 24 24"><path d="M7 13L1 20" stroke="#222" stroke-width="3.4" stroke-linecap="round"/><path d="M5.2 15.2L1.4000000000000004 19.6" stroke="#e8c22a" stroke-width="2.1"/><circle cx="13" cy="8" r="7.67" fill="#f0f0f0" stroke="#555" stroke-width="1.3"/><rect x="13" y="13" width="10" height="10" fill="#5b8fce" stroke="#3f6fae" stroke-width="0.5"/><path d="M20 15L16 18L20 21" fill="none" stroke="#fff" stroke-width="1.8"/></svg>
<svg style="left:563.0px;top:59.0px" width="24.0" height="24.0" viewBox="0 0 24 24"><path d="M7 13L1 20" stroke="#222" stroke-width="3.4" stroke-linecap="round"/><path d="M5.2 15.2L1.4000000000000004 19.6" stroke="#e0e0e0" stroke-width="2.1"/><circle cx="13" cy="8" r="7.67" fill="#f0f0f0" stroke="#999" stroke-width="1.3"/><rect x="13" y="13" width="10" height="10" fill="#b3b3b3" stroke="#999" stroke-width="0.5"/><path d="M16 15L20 18L16 21" fill="none" stroke="#fff" stroke-width="1.8"/></svg>
<svg style="left:597.0px;top:59.0px" width="24.0" height="24.0" viewBox="0 0 24 24"><path d="M4 3H19V20H4Z" fill="#e6e6e6" stroke="#8a8a8a" stroke-width="0.9"/><path d="M2 3.5C2 2 6 2 6 3.5V19C6 21 2 21 2 19Z" fill="#f2f2f2" stroke="#8a8a8a" stroke-width="0.8"/><rect x="13.5" y="14" width="9" height="9" rx="1.5" fill="#c9a313"/><path d="M18.0 15.5V21.5M15.0 18.5H21.0M15.9 16.4L20.1 20.6M20.1 16.4L15.9 20.6" stroke="#fff" stroke-width="1.1"/></svg>
<svg style="left:630.0px;top:59.0px" width="24.0" height="24.0" viewBox="0 0 24 24"><path d="M4 3H19V20H4Z" fill="#e6e6e6" stroke="#8a8a8a" stroke-width="0.9"/><path d="M2 3.5C2 2 6 2 6 3.5V19C6 21 2 21 2 19Z" fill="#f2f2f2" stroke="#8a8a8a" stroke-width="0.8"/><path d="M11.5 0.5H14.5V6L13 8L11.5 6Z" fill="#5b8fce" stroke="#3f6fae" stroke-width="0.5"/><rect x="13.5" y="14" width="9" height="9" rx="1.5" fill="#c9a313"/><path d="M18.0 15.5V21.5M15.0 18.5H21.0M15.9 16.4L20.1 20.6M20.1 16.4L15.9 20.6" stroke="#fff" stroke-width="1.1"/></svg>
<svg style="left:662.0px;top:59.0px" width="24.0" height="24.0" viewBox="0 0 24 24"><path d="M4 3H19V20H4Z" fill="#e6e6e6" stroke="#8a8a8a" stroke-width="0.9"/><path d="M2 3.5C2 2 6 2 6 3.5V19C6 21 2 21 2 19Z" fill="#f2f2f2" stroke="#8a8a8a" stroke-width="0.8"/><path d="M11.5 0.5H14.5V6L13 8L11.5 6Z" fill="#5b8fce" stroke="#3f6fae" stroke-width="0.5"/></svg>
<svg style="left:695.0px;top:59.0px" width="24.0" height="24.0" viewBox="0 0 24 24"><path d="M3.5 11A8.5 8.5 0 0 1 18 5L20 3V10H13L15.5 7.5A5.5 5.5 0 0 0 6.5 11Z" fill="#4a86cf"/><path d="M20.5 13A8.5 8.5 0 0 1 6 19L4 21V14H11L8.5 16.5A5.5 5.5 0 0 0 17.5 13Z" fill="#4a86cf"/></svg>
<svg style="left:0;top:0" width="1364" height="140"><rect x="732" y="62.5" width="1.1" height="1.1" fill="#aeaaa4"/><rect x="735" y="62.5" width="1.1" height="1.1" fill="#aeaaa4"/><rect x="732" y="65.7" width="1.1" height="1.1" fill="#aeaaa4"/><rect x="735" y="65.7" width="1.1" height="1.1" fill="#aeaaa4"/><rect x="732" y="68.9" width="1.1" height="1.1" fill="#aeaaa4"/><rect x="735" y="68.9" width="1.1" height="1.1" fill="#aeaaa4"/><rect x="732" y="72.1" width="1.1" height="1.1" fill="#aeaaa4"/><rect x="735" y="72.1" width="1.1" height="1.1" fill="#aeaaa4"/><rect x="732" y="75.3" width="1.1" height="1.1" fill="#aeaaa4"/><rect x="735" y="75.3" width="1.1" height="1.1" fill="#aeaaa4"/><rect x="732" y="78.5" width="1.1" height="1.1" fill="#aeaaa4"/><rect x="735" y="78.5" width="1.1" height="1.1" fill="#aeaaa4"/></svg>
<svg style="left:744.0px;top:59.0px" width="24.0" height="24.0" viewBox="0 0 24 24"><circle cx="9" cy="9" r="8" fill="#5a8dd0" stroke="#4070b0" stroke-width="0.6"/><text x="6.5" y="14" font-size="12" font-style="italic" font-weight="bold" font-family="Liberation Serif" fill="#fff">i</text><path d="M11 10V21L14 18L16.5 22.5L18.5 21.5L16 17.5H20Z" fill="#fff" stroke="#333" stroke-width="0.8" stroke-linejoin="round"/></svg>
<svg style="left:777.0px;top:59.0px" width="24.0" height="24.0" viewBox="0 0 24 24"><circle cx="10" cy="10" r="7.5" fill="none" stroke="#bbb" stroke-width="2.5" stroke-dasharray="2.5 1.5"/><circle cx="10" cy="10" r="5" fill="#bdbdbd"/><path d="M8.5 7.5V12.5L12.5 10Z" fill="#fff"/><path d="M12 11V22L15 19L17.5 23.5L19.5 22.5L17 18.5H21Z" fill="#fff" stroke="#333" stroke-width="0.8" stroke-linejoin="round"/></svg>
<svg style="left:805.5px;top:66.0px" width="10.0" height="10.0" viewBox="0 0 10 10"><path d="M1 2.5H9L5 7Z" fill="#bbb"/></svg>
<svg style="left:822.0px;top:59.0px" width="24.0" height="24.0" viewBox="0 0 24 24"><rect x="1" y="1" width="20" height="18" fill="#e8e8e8" stroke="#333" stroke-width="0.9" stroke-dasharray="1.5 1"/><rect x="2" y="2" width="13" height="13" fill="#f5dc3f" stroke="#bfa020" stroke-width="0.5"/><path d="M11 10V21L14 18L16.5 22.5L18.5 21.5L16 17.5H20Z" fill="#fff" stroke="#333" stroke-width="0.8" stroke-linejoin="round"/></svg>
<svg style="left:850.5px;top:66.0px" width="10.0" height="10.0" viewBox="0 0 10 10"><path d="M1 2.5H9L5 7Z" fill="#333"/></svg>
<svg style="left:867.0px;top:59.0px" width="24.0" height="24.0" viewBox="0 0 24 24"><path d="M2 4H21V22H2Z" fill="#ececec" stroke="#8a8a8a" stroke-width="0.8"/><path d="M2 4L21 22H2Z" fill="#f5dc3f" stroke="#c9a313" stroke-width="0.7"/></svg>
<svg style="left:895.5px;top:66.0px" width="10.0" height="10.0" viewBox="0 0 10 10"><path d="M1 2.5H9L5 7Z" fill="#333"/></svg>
<svg style="left:912.5px;top:59.0px" width="24.0" height="24.0" viewBox="0 0 24 24"><rect x="1" y="3" width="13" height="13" fill="#f5dc3f" stroke="#c9a313" stroke-width="0.6"/><rect x="12" y="13" width="10" height="10" rx="1.5" fill="#d9262b"/><circle cx="17" cy="18" r="3" fill="none" stroke="#fff" stroke-width="1"/><path d="M15 20L19 16" stroke="#fff" stroke-width="1"/></svg>
<svg style="left:945.0px;top:59.0px" width="24.0" height="24.0" viewBox="0 0 24 24"><rect x="2.5" y="3" width="19" height="18" fill="#f4f8fc" stroke="#6a98d0" stroke-width="1"/><rect x="2.5" y="3" width="19" height="3.5" fill="#8ab0de"/><path d="M5 9.5H19M5 12.5H19M5 15.5H19M5 18.5H19" stroke="#6a98d0" stroke-width="1"/></svg>
<svg style="left:978.0px;top:59.0px" width="24.0" height="24.0" viewBox="0 0 24 24"><path d="M2.5 21V2.5H21.5V21" fill="none" stroke="#666" stroke-width="1.2"/><path d="M1 21.5H23" stroke="#777" stroke-width="1.8"/><path d="M3 6H21M3 11H21M3 16H21" stroke="#777" stroke-width="0.8"/><g fill="#fff" stroke-width="1"><path d="M9 6l2-2 2 2-2 2zM14 6l2-2 2 2-2 2z" stroke="#d04040"/><path d="M5.5 11l2-2 2 2-2 2zM10.5 11l2-2 2 2-2 2z" stroke="#40a050"/><path d="M8 16l2-2 2 2-2 2zM12.5 16l2-2 2 2-2 2z" stroke="#4a80c8"/></g></svg>
<svg style="left:1011.0px;top:59.0px" width="24.0" height="24.0" viewBox="0 0 24 24"><path d="M3 2H18.5L19.5 7.5H18C17.5 5 16.5 4.5 14 4.5H8L13 12L7 19.5H15C17 19.5 18 18.5 18.8 16.5H20.5L19 22H3L10.5 12.5L3 3.5Z" fill="#9e1fa6"/></svg>
<svg style="left:1044.0px;top:59.0px" width="24.0" height="24.0" viewBox="0 0 24 24"><path d="M2 6H22M2.5 4V8M21.5 4V8" stroke="#3a5f8a" stroke-width="1.6"/><rect x="1.5" y="12" width="21" height="7" fill="#d8d8d8" stroke="#888" stroke-width="1"/><path d="M5 12V15M8 12V16M11 12V15M14 12V16M17 12V15M20 12V16" stroke="#777" stroke-width="0.8"/></svg>
<svg style="left:1072.5px;top:66.0px" width="10.0" height="10.0" viewBox="0 0 10 10"><path d="M1 2.5H9L5 7Z" fill="#333"/></svg>
<svg style="left:1089.0px;top:59.0px" width="24.0" height="24.0" viewBox="0 0 24 24"><path d="M4 2H20C22 2 23 3 23 5V11C23 13 22 14 20 14H10L6 17V14H4C2 14 1 13 1 11V5C1 3 2 2 4 2Z" fill="#fbeb8c" stroke="#c9a82c" stroke-width="0.9"/><circle cx="5.5" cy="18.5" r="3.3" fill="#6aaa6c" stroke="#444" stroke-width="0.7"/></svg>
<svg style="left:1122.0px;top:59.0px" width="24.0" height="24.0" viewBox="0 0 24 24"><path d="M2 2H22V15H9L4 20V15H2Z" fill="#eaf0f6" stroke="#888" stroke-width="0.9"/><text x="7" y="13.5" font-size="13" font-family="Liberation Serif" fill="#333">T</text></svg>
<svg style="left:1150.5px;top:66.0px" width="10.0" height="10.0" viewBox="0 0 10 10"><path d="M1 2.5H9L5 7Z" fill="#333"/></svg>
<svg style="left:19.0px;top:98.0px" width="24.0" height="24.0" viewBox="0 0 24 24"><path d="M1.5 10L9 7.5L12.5 19L5 21.5Z" fill="#e06a2c" stroke="#b8541f" stroke-width="0.6"/><path d="M4 6.5L12 5L14 17L6 18.5Z" fill="#f2c52e" stroke="#c9a313" stroke-width="0.6"/><path d="M9 2L20 3.5L18.5 15L7.5 13.5Z" fill="#5f92cf" stroke="#3f6fae" stroke-width="0.6"/><rect x="13" y="14" width="9.5" height="9.5" rx="1.5" fill="#5a9a5e"/><path d="M17.75 15.5V22M14.5 18.75H21" stroke="#fff" stroke-width="2"/></svg>
<svg style="left:52.0px;top:98.0px" width="24.0" height="24.0" viewBox="0 0 24 24"><circle cx="12" cy="8" r="7.5" fill="#8fb0dc" stroke="#3b5f94" stroke-width="0.7"/><path d="M7 4C9 3 10 5 12 4.5C13 6 11 8 9 8C8 7 7 6 7 4ZM13 9C15 8 17 9 18 11C17 13 15 13 14 12Z" fill="#2f4f7a"/><path d="M1.5 10L10 14V23L1.5 19Z" fill="#d0a81c" stroke="#5a4a10" stroke-width="0.7"/><path d="M10 14L22 10V19L10 23Z" fill="#fbe870" stroke="#5a4a10" stroke-width="0.7"/><path d="M1.5 10L14 6.5L22 10" fill="none" stroke="#5a4a10" stroke-width="0.7"/><rect x="14" y="14" width="9" height="9" rx="1.5" fill="#c9a313"/><path d="M18.5 15.5V21.5M15.5 18.5H21.5M16.4 16.4L20.6 20.6M20.6 16.4L16.4 20.6" stroke="#fff" stroke-width="1.1"/></svg>
<svg style="left:85.0px;top:98.0px" width="24.0" height="24.0" viewBox="0 0 24 24"><path d="M2.5 3L9 19L14.5 4L21 3" fill="none" stroke="#334" stroke-width="1.3"/><circle cx="2.5" cy="3" r="1.5" fill="#fff" stroke="#334" stroke-width="0.7"/><circle cx="9" cy="19" r="1.6" fill="#fff" stroke="#334" stroke-width="0.8"/><circle cx="14.5" cy="4" r="1.5" fill="#fff" stroke="#334" stroke-width="0.7"/><circle cx="21" cy="3" r="1.5" fill="#fff" stroke="#334" stroke-width="0.7"/><rect x="14" y="14" width="9" height="9" rx="1.5" fill="#c9a313"/><path d="M18.5 15.5V21.5M15.5 18.5H21.5M16.4 16.4L20.6 20.6M20.6 16.4L16.4 20.6" stroke="#fff" stroke-width="1.1"/></svg>
<svg style="left:118.0px;top:98.0px" width="24.0" height="24.0" viewBox="0 0 24 24"><path d="M2 22C4 14 10 5 20 1C22 5 17 14 8 18L3 23Z" fill="#8fb4df" stroke="#4a72a3" stroke-width="0.8"/><path d="M3 22L16 7" stroke="#4a72a3" stroke-width="0.8"/><rect x="14" y="14" width="9" height="9" rx="1.5" fill="#c9a313"/><path d="M18.5 15.5V21.5M15.5 18.5H21.5M16.4 16.4L20.6 20.6M20.6 16.4L16.4 20.6" stroke="#fff" stroke-width="1.1"/></svg>
<svg style="left:152.0px;top:98.0px" width="24.0" height="24.0" viewBox="0 0 24 24"><rect x="2" y="6" width="17" height="11" rx="1.5" fill="#6093cf" stroke="#2d5a8f" stroke-width="0.8"/><path d="M5 2.5V6M8 2.5V6M11 2.5V6M14 2.5V6M5 17V21M8 17V21M11 17V21" stroke="#2d5a8f" stroke-width="1"/><rect x="14" y="14" width="9" height="9" rx="1.5" fill="#c9a313"/><path d="M18.5 15.5V21.5M15.5 18.5H21.5M16.4 16.4L20.6 20.6M20.6 16.4L16.4 20.6" stroke="#fff" stroke-width="1.1"/></svg>
<svg style="left:0;top:0" width="1364" height="140"><rect x="188" y="101.5" width="1.1" height="1.1" fill="#aeaaa4"/><rect x="191" y="101.5" width="1.1" height="1.1" fill="#aeaaa4"/><rect x="188" y="104.7" width="1.1" height="1.1" fill="#aeaaa4"/><rect x="191" y="104.7" width="1.1" height="1.1" fill="#aeaaa4"/><rect x="188" y="107.9" width="1.1" height="1.1" fill="#aeaaa4"/><rect x="191" y="107.9" width="1.1" height="1.1" fill="#aeaaa4"/><rect x="188" y="111.1" width="1.1" height="1.1" fill="#aeaaa4"/><rect x="191" y="111.1" width="1.1" height="1.1" fill="#aeaaa4"/><rect x="188" y="114.3" width="1.1" height="1.1" fill="#aeaaa4"/><rect x="191" y="114.3" width="1.1" height="1.1" fill="#aeaaa4"/><rect x="188" y="117.5" width="1.1" height="1.1" fill="#aeaaa4"/><rect x="191" y="117.5" width="1.1" height="1.1" fill="#aeaaa4"/></svg>
<svg style="left:200.0px;top:98.0px" width="24.0" height="24.0" viewBox="0 0 24 24"><path d="M3 21L5 15L15 2L18 4L8 17Z" fill="#bbb" stroke="#999" stroke-width="0.7"/><path d="M7 22L9 16L19 3L22 5L12 18Z" fill="#c4c4c4" stroke="#999" stroke-width="0.7"/></svg>
<svg style="left:214.0px;top:115.0px" width="8.0" height="6.0" viewBox="0 0 8 6"><path d="M1 1H7L4 4Z" fill="#bbb"/></svg>
<svg style="left:232.0px;top:98.0px" width="24.0" height="24.0" viewBox="0 0 24 24"><path d="M5 22L6.5 16L17 2.5L20.5 5L10 18.5Z" fill="#f3da3a" stroke="#666" stroke-width="0.8"/><path d="M5 22L6.5 16L10 18.5Z" fill="#555"/><path d="M16 3.5L19.5 6" stroke="#eee" stroke-width="2"/></svg>
<svg style="left:266.0px;top:98.0px" width="24.0" height="24.0" viewBox="0 0 24 24"><rect x="2" y="2" width="18" height="19" rx="2" fill="#b8b8b8" stroke="#999" stroke-width="0.6"/><rect x="5" y="3" width="12" height="6" fill="#ececec"/><rect x="5" y="13" width="11" height="7" fill="#e4e4e4"/><path d="M12 23L13 19L21 10L23 12L15 21Z" fill="#aaa" stroke="#888" stroke-width="0.6"/></svg>
<svg style="left:299.0px;top:98.0px" width="24.0" height="24.0" viewBox="0 0 24 24"><path d="M2.5 3L8 17L13.5 7H21" fill="none" stroke="#aaa" stroke-width="1"/><rect x="1" y="1.5" width="3" height="3" fill="#fff" stroke="#aaa" stroke-width="0.7"/><rect x="12" y="5.5" width="3" height="3" fill="#fff" stroke="#aaa" stroke-width="0.7"/><rect x="19.5" y="5.5" width="3" height="3" fill="#fff" stroke="#aaa" stroke-width="0.7"/><rect x="13" y="13" width="10" height="10" rx="1.5" fill="#b5b5b5"/><circle cx="18" cy="18" r="2.2" fill="none" stroke="#fff" stroke-width="1.2"/></svg>
<svg style="left:332.0px;top:98.0px" width="24.0" height="24.0" viewBox="0 0 24 24"><circle cx="6" cy="5" r="3.5" fill="#ddd" stroke="#999" stroke-width="0.8"/><path d="M8 5H20M9 8.5H20" stroke="#aaa" stroke-width="1"/><path d="M5 8L2 20M7 8L5 20" stroke="#aaa" stroke-width="0.9"/><path d="M9 21L18 12M13 12L20 19" stroke="#b5b5b5" stroke-width="2.3"/></svg>
<svg style="left:360.5px;top:105.0px" width="10.0" height="10.0" viewBox="0 0 10 10"><path d="M1 2.5H9L5 7Z" fill="#bbb"/></svg>
<svg style="left:377.0px;top:98.0px" width="24.0" height="24.0" viewBox="0 0 24 24"><rect x="1.5" y="2" width="19" height="5" fill="#ececec" stroke="#b0b0b0" stroke-width="0.7"/><rect x="1.5" y="9" width="19" height="5" fill="#ececec" stroke="#b0b0b0" stroke-width="0.7"/><rect x="1.5" y="16" width="19" height="5" fill="#ececec" stroke="#b0b0b0" stroke-width="0.7"/><path d="M6 23L8 17L19 2L22 4L11 19Z" fill="#c8c8c8" stroke="#999" stroke-width="0.7"/></svg>
<svg style="left:410.0px;top:98.0px" width="24.0" height="24.0" viewBox="0 0 24 24"><path d="M4 5H20" stroke="#8a8a8a" stroke-width="1.8"/><path d="M9 4.5V2.5H15V4.5" fill="none" stroke="#8a8a8a" stroke-width="1"/><path d="M5.5 7H18.5L17.5 21H6.5Z" fill="none" stroke="#8a8a8a" stroke-width="1.6"/><path d="M9.5 9V19M12 9V19M14.5 9V19" stroke="#8a8a8a" stroke-width="1.3"/></svg>
<svg style="left:443.0px;top:98.0px" width="24.0" height="24.0" viewBox="0 0 24 24"><path d="M1.5 9L17 13.5M3 12.5L16 9" stroke="#999" stroke-width="1.4"/><ellipse cx="19" cy="8" rx="3" ry="2.5" fill="none" stroke="#8a8a8a" stroke-width="1.3"/><ellipse cx="18.5" cy="15" rx="3" ry="2.5" fill="none" stroke="#8a8a8a" stroke-width="1.3"/></svg>
<svg style="left:476.0px;top:98.0px" width="24.0" height="24.0" viewBox="0 0 24 24"><path d="M9 2H17L20 5V16H9Z" fill="#fafafa" stroke="#999" stroke-width="0.8"/><path d="M11 8H18M11 10.5H18M11 13H18" stroke="#aaa" stroke-width="0.8"/><path d="M4 7H12L15 10V21H4Z" fill="#fafafa" stroke="#999" stroke-width="0.8"/><path d="M6 13H13M6 15.5H13M6 18H13" stroke="#aaa" stroke-width="0.8"/></svg>
<svg style="left:509.0px;top:98.0px" width="24.0" height="24.0" viewBox="0 0 24 24"><rect x="3" y="3" width="17" height="19" rx="1" fill="#e4e4e4" stroke="#999" stroke-width="0.8"/><rect x="8" y="1.5" width="7" height="3" fill="#ccc" stroke="#999" stroke-width="0.6"/><path d="M6 6H14L17 9V20H6Z" fill="#fafafa" stroke="#999" stroke-width="0.8"/><path d="M8 12H15M8 14.5H15M8 17H15" stroke="#aaa" stroke-width="0.8"/></svg>
<svg style="left:542.0px;top:98.0px" width="24.0" height="24.0" viewBox="0 0 24 24"><path d="M8 4L2 10L8 16V12.5C13 12.5 15 14 15.5 19C19 13 16.5 7.5 8 7.5Z" fill="#bdbdbd" stroke="#a8a8a8" stroke-width="0.5"/></svg>
<svg style="left:575.0px;top:98.0px" width="24.0" height="24.0" viewBox="0 0 24 24"><path d="M16 4L22 10L16 16V12.5C11 12.5 9 14 8.5 19C5 13 7.5 7.5 16 7.5Z" fill="#bdbdbd" stroke="#a8a8a8" stroke-width="0.5"/></svg>
<svg style="left:0;top:0" width="1364" height="140"><rect x="612" y="101.5" width="1.1" height="1.1" fill="#aeaaa4"/><rect x="615" y="101.5" width="1.1" height="1.1" fill="#aeaaa4"/><rect x="612" y="104.7" width="1.1" height="1.1" fill="#aeaaa4"/><rect x="615" y="104.7" width="1.1" height="1.1" fill="#aeaaa4"/><rect x="612" y="107.9" width="1.1" height="1.1" fill="#aeaaa4"/><rect x="615" y="107.9" width="1.1" height="1.1" fill="#aeaaa4"/><rect x="612" y="111.1" width="1.1" height="1.1" fill="#aeaaa4"/><rect x="615" y="111.1" width="1.1" height="1.1" fill="#aeaaa4"/><rect x="612" y="114.3" width="1.1" height="1.1" fill="#aeaaa4"/><rect x="615" y="114.3" width="1.1" height="1.1" fill="#aeaaa4"/><rect x="612" y="117.5" width="1.1" height="1.1" fill="#aeaaa4"/><rect x="615" y="117.5" width="1.1" height="1.1" fill="#aeaaa4"/></svg>
<svg style="left:623.0px;top:98.0px" width="24.0" height="24.0" viewBox="0 0 24 24"><path d="M5 5H22V14H5L1 9.5Z" fill="#f6e05a" stroke="#c9a313" stroke-width="0.8"/><text x="6" y="12.5" font-size="8.5" font-weight="bold" font-family="Liberation Sans" fill="#333">abc</text></svg>
<svg style="left:657.0px;top:98.0px" width="24.0" height="24.0" viewBox="0 0 24 24"><path d="M8.5 8.5L2.61 5.10A6.8 6.8 0 0 1 14.39 5.10Z" fill="#f5d800"/><path d="M8.5 8.5L14.39 5.10A6.8 6.8 0 0 1 8.50 15.30Z" fill="#c41818"/><path d="M8.5 8.5L8.50 15.30A6.8 6.8 0 0 1 2.61 5.10Z" fill="#18a848"/><circle cx="8.5" cy="8.5" r="6.8" fill="none" stroke="#3a3a18" stroke-width="0.5"/><rect x="10" y="16" width="3.5" height="7" fill="#f5c400"/><rect x="14.5" y="10.5" width="3.5" height="12.5" fill="#18a848" stroke="#0a5a20" stroke-width="0.6"/><rect x="19" y="17" width="3.5" height="6" fill="#c41818" stroke="#5a0a0a" stroke-width="0.6"/></svg>
<div class="a" style="left:690px;top:100px;width:24px;height:20.5px;border:1.5px solid #2f7ae5;background:#e2e8ef"></div>
<svg style="left:690.0px;top:98.0px" width="24.0" height="24.0" viewBox="0 0 24 24"><path d="M4.5 5H22V14H4.5L0.5 9.5Z" fill="#f6e05a" stroke="#c9a313" stroke-width="0.8"/><text x="5.5" y="12.5" font-size="8.5" font-weight="bold" font-family="Liberation Sans" fill="#333">ab</text><circle cx="18" cy="17" r="4.5" fill="#b52a2a"/><path d="M17 10V15" stroke="#fff" stroke-width="1.5"/></svg>
<svg style="left:723.0px;top:98.0px" width="24.0" height="24.0" viewBox="0 0 24 24"><path d="M4.5 5H22V14H4.5L0.5 9.5Z" fill="#ececec" stroke="#aaa" stroke-width="0.8"/><text x="5.5" y="12.5" font-size="8.5" font-weight="bold" font-family="Liberation Sans" fill="#888">ab</text><circle cx="18" cy="18" r="4.5" fill="#8a8a8a"/><path d="M17 11V15" stroke="#fff" stroke-width="1.5"/></svg>
<svg style="left:756.0px;top:98.0px" width="24.0" height="24.0" viewBox="0 0 24 24"><path d="M4.5 5H22V14H4.5L0.5 9.5Z" fill="#ececec" stroke="#aaa" stroke-width="0.8"/><text x="5.5" y="12.5" font-size="8" font-weight="bold" font-family="Liberation Sans" fill="#888">abc</text><ellipse cx="15" cy="18.5" rx="7" ry="3.5" fill="#fff" stroke="#999" stroke-width="0.8"/><circle cx="15" cy="18.5" r="2" fill="#777"/></svg>
<svg style="left:789.0px;top:98.0px" width="24.0" height="24.0" viewBox="0 0 24 24"><path d="M4.5 5H22V14H4.5L0.5 9.5Z" fill="#ececec" stroke="#aaa" stroke-width="0.8"/><text x="5.5" y="12.5" font-size="8" font-weight="bold" font-family="Liberation Sans" fill="#888">abc</text><rect x="13" y="14" width="10" height="10" rx="1.5" fill="#9a9a9a"/><path d="M15 19H19M17.5 16.5L20.5 19L17.5 21.5" stroke="#fff" stroke-width="1.6" fill="none"/></svg>
<svg style="left:822.0px;top:98.0px" width="24.0" height="24.0" viewBox="0 0 24 24"><path d="M4.5 5H22V14H4.5L0.5 9.5Z" fill="#ececec" stroke="#aaa" stroke-width="0.8"/><text x="5.5" y="12.5" font-size="8" font-weight="bold" font-family="Liberation Sans" fill="#888">abc</text><rect x="13" y="14" width="10" height="10" rx="1.5" fill="#9a9a9a"/><circle cx="18" cy="19" r="2.6" fill="none" stroke="#fff" stroke-width="1.3"/></svg>
<svg style="left:855.0px;top:98.0px" width="24.0" height="24.0" viewBox="0 0 24 24"><path d="M4.5 5H22V14H4.5L0.5 9.5Z" fill="#ececec" stroke="#aaa" stroke-width="0.8"/><text x="5.5" y="12.5" font-size="8" font-weight="bold" font-family="Liberation Sans" fill="#888">abc</text><rect x="13" y="14" width="10" height="10" rx="1.5" fill="#c0c0c0"/><path d="M15 22L21 16" stroke="#fff" stroke-width="1.5"/></svg>
<svg style="left:0;top:0" width="1364" height="140"><rect x="892" y="101.5" width="1.1" height="1.1" fill="#aeaaa4"/><rect x="895" y="101.5" width="1.1" height="1.1" fill="#aeaaa4"/><rect x="892" y="104.7" width="1.1" height="1.1" fill="#aeaaa4"/><rect x="895" y="104.7" width="1.1" height="1.1" fill="#aeaaa4"/><rect x="892" y="107.9" width="1.1" height="1.1" fill="#aeaaa4"/><rect x="895" y="107.9" width="1.1" height="1.1" fill="#aeaaa4"/><rect x="892" y="111.1" width="1.1" height="1.1" fill="#aeaaa4"/><rect x="895" y="111.1" width="1.1" height="1.1" fill="#aeaaa4"/><rect x="892" y="114.3" width="1.1" height="1.1" fill="#aeaaa4"/><rect x="895" y="114.3" width="1.1" height="1.1" fill="#aeaaa4"/><rect x="892" y="117.5" width="1.1" height="1.1" fill="#aeaaa4"/><rect x="895" y="117.5" width="1.1" height="1.1" fill="#aeaaa4"/></svg>
<svg style="left:904.0px;top:98.0px" width="24.0" height="24.0" viewBox="0 0 24 24"><circle cx="12" cy="10" r="9.5" fill="#4f7fbd" stroke="#2d4f80" stroke-width="0.7"/><path d="M3 10H21M12 1V19M5 5H19M5 15H19" stroke="#b8cde8" stroke-width="0.8"/><ellipse cx="12" cy="10" rx="4.5" ry="9.5" fill="none" stroke="#b8cde8" stroke-width="0.8"/><ellipse cx="7" cy="19" rx="4" ry="3.3" fill="#111"/><ellipse cx="17" cy="19" rx="4" ry="3.3" fill="#111"/><rect x="9" y="16" width="6" height="3" fill="#111"/><circle cx="7" cy="19.3" r="1.8" fill="#fff"/><circle cx="17" cy="19.3" r="1.8" fill="#fff"/></svg>
<svg style="left:0;top:0" width="1364" height="140"><rect x="941" y="101.5" width="1.1" height="1.1" fill="#aeaaa4"/><rect x="944" y="101.5" width="1.1" height="1.1" fill="#aeaaa4"/><rect x="941" y="104.7" width="1.1" height="1.1" fill="#aeaaa4"/><rect x="944" y="104.7" width="1.1" height="1.1" fill="#aeaaa4"/><rect x="941" y="107.9" width="1.1" height="1.1" fill="#aeaaa4"/><rect x="944" y="107.9" width="1.1" height="1.1" fill="#aeaaa4"/><rect x="941" y="111.1" width="1.1" height="1.1" fill="#aeaaa4"/><rect x="944" y="111.1" width="1.1" height="1.1" fill="#aeaaa4"/><rect x="941" y="114.3" width="1.1" height="1.1" fill="#aeaaa4"/><rect x="944" y="114.3" width="1.1" height="1.1" fill="#aeaaa4"/><rect x="941" y="117.5" width="1.1" height="1.1" fill="#aeaaa4"/><rect x="944" y="117.5" width="1.1" height="1.1" fill="#aeaaa4"/></svg>
<svg style="left:953.5px;top:98.0px" width="24.0" height="24.0" viewBox="0 0 24 24"><path d="M11.5 1.5C7 1.5 7 3.5 7 5V7.5H12V8.5H4.5C2 8.5 1 11 1 13S2 17.5 4.5 17.5H7V14.5C7 12.5 8.5 11.5 10.5 11.5H15C16.5 11.5 17 10.5 17 9V5C17 3 15 1.5 11.5 1.5Z" fill="#3d79b3"/><circle cx="9.5" cy="4" r="1" fill="#fff"/><path d="M12.5 22.5C17 22.5 17 20.5 17 19V16.5H12V15.5H19.5C22 15.5 23 13 23 11S22 6.5 19.5 6.5H17V9.5C17 11.5 15.5 12.5 13.5 12.5H9C7.5 12.5 7 13.5 7 15V19C7 21 9 22.5 12.5 22.5Z" fill="#f7cf40"/><path d="M15 17L21 20L15 23" fill="none" stroke="#333" stroke-width="0.9"/></svg>
<svg style="left:0;top:0" width="1364" height="140"><rect x="989.5" y="101.5" width="1.1" height="1.1" fill="#aeaaa4"/><rect x="992.5" y="101.5" width="1.1" height="1.1" fill="#aeaaa4"/><rect x="989.5" y="104.7" width="1.1" height="1.1" fill="#aeaaa4"/><rect x="992.5" y="104.7" width="1.1" height="1.1" fill="#aeaaa4"/><rect x="989.5" y="107.9" width="1.1" height="1.1" fill="#aeaaa4"/><rect x="992.5" y="107.9" width="1.1" height="1.1" fill="#aeaaa4"/><rect x="989.5" y="111.1" width="1.1" height="1.1" fill="#aeaaa4"/><rect x="992.5" y="111.1" width="1.1" height="1.1" fill="#aeaaa4"/><rect x="989.5" y="114.3" width="1.1" height="1.1" fill="#aeaaa4"/><rect x="992.5" y="114.3" width="1.1" height="1.1" fill="#aeaaa4"/><rect x="989.5" y="117.5" width="1.1" height="1.1" fill="#aeaaa4"/><rect x="992.5" y="117.5" width="1.1" height="1.1" fill="#aeaaa4"/></svg>
<svg style="left:1002.0px;top:98.0px" width="24.0" height="24.0" viewBox="0 0 24 24"><rect x="3" y="1.5" width="18" height="20" fill="#5b8ac0" stroke="#1f3046" stroke-width="1"/><rect x="3" y="1.5" width="4" height="20" fill="#2a3d55"/><text x="10.5" y="15.5" font-size="12" font-family="Liberation Sans" fill="#fff">?</text></svg>
<svg style="left:0;top:0" width="1364" height="140"><rect x="1039" y="101.5" width="1.1" height="1.1" fill="#aeaaa4"/><rect x="1042" y="101.5" width="1.1" height="1.1" fill="#aeaaa4"/><rect x="1039" y="104.7" width="1.1" height="1.1" fill="#aeaaa4"/><rect x="1042" y="104.7" width="1.1" height="1.1" fill="#aeaaa4"/><rect x="1039" y="107.9" width="1.1" height="1.1" fill="#aeaaa4"/><rect x="1042" y="107.9" width="1.1" height="1.1" fill="#aeaaa4"/><rect x="1039" y="111.1" width="1.1" height="1.1" fill="#aeaaa4"/><rect x="1042" y="111.1" width="1.1" height="1.1" fill="#aeaaa4"/><rect x="1039" y="114.3" width="1.1" height="1.1" fill="#aeaaa4"/><rect x="1042" y="114.3" width="1.1" height="1.1" fill="#aeaaa4"/><rect x="1039" y="117.5" width="1.1" height="1.1" fill="#aeaaa4"/><rect x="1042" y="117.5" width="1.1" height="1.1" fill="#aeaaa4"/></svg>
<svg style="left:0;top:0" width="1364" height="140"><rect x="1055.5" y="101.5" width="1.1" height="1.1" fill="#aeaaa4"/><rect x="1058.5" y="101.5" width="1.1" height="1.1" fill="#aeaaa4"/><rect x="1055.5" y="104.7" width="1.1" height="1.1" fill="#aeaaa4"/><rect x="1058.5" y="104.7" width="1.1" height="1.1" fill="#aeaaa4"/><rect x="1055.5" y="107.9" width="1.1" height="1.1" fill="#aeaaa4"/><rect x="1058.5" y="107.9" width="1.1" height="1.1" fill="#aeaaa4"/><rect x="1055.5" y="111.1" width="1.1" height="1.1" fill="#aeaaa4"/><rect x="1058.5" y="111.1" width="1.1" height="1.1" fill="#aeaaa4"/><rect x="1055.5" y="114.3" width="1.1" height="1.1" fill="#aeaaa4"/><rect x="1058.5" y="114.3" width="1.1" height="1.1" fill="#aeaaa4"/><rect x="1055.5" y="117.5" width="1.1" height="1.1" fill="#aeaaa4"/><rect x="1058.5" y="117.5" width="1.1" height="1.1" fill="#aeaaa4"/></svg>
<svg style="left:1067.0px;top:98.0px" width="24.0" height="24.0" viewBox="0 0 24 24"><path d="M2 2L8 3L14 1L22 3L21 10L23 16L21 22L14 21L8 23L2 21L3 14L1 8Z" fill="#a9d49a"/><path d="M5 6C9 9 12 5 16 8C18 10 14 14 18 17" fill="none" stroke="#8ab0e0" stroke-width="2"/><path d="M12 19L20 12M14 13L20 19" stroke="#3a7a2a" stroke-width="1.5"/></svg>
<svg style="left:1100.0px;top:98.0px" width="24.0" height="24.0" viewBox="0 0 24 24"><path d="M2 4L9 3L15 5L21 4L22 22L15 21L9 22L2 21Z" fill="#f3d98a"/><path d="M3 12L10 10L16 18L21 14" fill="none" stroke="#5b8ac0" stroke-width="2.5"/><path d="M2 3H7V9H2Z" fill="#3ea14a"/><path d="M9 17L20 2" stroke="#7a3a18" stroke-width="2.5"/><path d="M6 20L9 17" stroke="#444" stroke-width="1.5"/></svg>
<svg style="left:9.100000000000001px;top:155.6px" width="16.799999999999997" height="16.799999999999997" viewBox="0 0 24 24"><path d="M2 14L9 9L12 16L5 20Z" fill="#d83a3a"/><path d="M3 11L10 6L12 11L5 16Z" fill="#5a8ed0"/><path d="M4 8L11 3L13 8L6 12Z" fill="#f3d43a"/><path d="M10 11L19 3" stroke="#a87a3a" stroke-width="2.5"/><path d="M7 12L11 9L15 15L11 18Z" fill="#d8b070"/></svg>
<svg style="left:34.1px;top:155.6px" width="16.799999999999997" height="16.799999999999997" viewBox="0 0 24 24"><path d="M3 8V20H15" fill="none" stroke="#888" stroke-width="1"/><path d="M5.5 6V18H17.5" fill="none" stroke="#888" stroke-width="1"/><rect x="8" y="4" width="11" height="12" fill="#fff" stroke="#888" stroke-width="1"/><path d="M12 12V2.5C12 1 14.5 1 14.5 2.5V11" fill="none" stroke="#4a7ab0" stroke-width="1.3"/><circle cx="18" cy="18" r="4" fill="#5aa36a"/><circle cx="18" cy="18" r="1.8" fill="#fff"/></svg>
<svg style="left:60.6px;top:155.6px" width="16.799999999999997" height="16.799999999999997" viewBox="0 0 24 24"><path d="M1 10C5 3 16 3 21 10C16 16 5 16 1 10Z" fill="#fff" stroke="#888" stroke-width="0.9"/><circle cx="11" cy="9.5" r="4.5" fill="#5a8ed0"/><circle cx="11" cy="9" r="1.8" fill="#111"/><path d="M15 15H23L19 19Z" fill="#333"/></svg>
<svg style="left:85.1px;top:155.6px" width="16.799999999999997" height="16.799999999999997" viewBox="0 0 24 24"><path d="M1.5 2.5H20.5L13 12V21L9 18V12Z" fill="#6a98d0" stroke="#3f6fae" stroke-width="0.6"/><rect x="1.5" y="2" width="19" height="2.5" fill="#f2d33a"/></svg>
<svg style="left:111.6px;top:155.6px" width="16.799999999999997" height="16.799999999999997" viewBox="0 0 24 24"><text x="1" y="15" font-size="15" font-family="Liberation Serif" fill="#aaa">ε</text><path d="M9 13H16V21H10Z" fill="#ccc"/></svg>
<svg style="left:130.5px;top:159.0px" width="10.0" height="10.0" viewBox="0 0 10 10"><path d="M1 2.5H9L5 7Z" fill="#bbb"/></svg>
<svg style="left:146.6px;top:155.6px" width="16.799999999999997" height="16.799999999999997" viewBox="0 0 24 24"><path d="M2 2H20" stroke="#888" stroke-width="1"/><path d="M4 2V20M4 8H7M4 16H7" stroke="#999" stroke-width="1"/><rect x="6" y="6" width="4" height="4" fill="#f29a22"/><rect x="6" y="14" width="4" height="4" fill="#f29a22"/><path d="M12 1H16V12H19.5L14 19L8.5 12H12Z" fill="#5b8fce" stroke="#3f6fae" stroke-width="0.6"/></svg>
<svg style="left:183.5px;top:159.5px" width="10.0" height="9.0" viewBox="0 0 10 9"><path d="M1 1.5L4.5 4.5L1 7.5M5.5 1.5L9 4.5L5.5 7.5" fill="none" stroke="#111" stroke-width="1.8"/></svg>
<svg style="left:936.0px;top:186.0px" width="24.0" height="24.0" viewBox="0 0 24 24"><path d="M2 16L10 10L13 18L5 21Z" fill="#c44"/><path d="M3 12L11 6L13 11L5 16Z" fill="#5a8ed0"/><path d="M4 8L12 2L14 7L6 12Z" fill="#b8d040"/><path d="M10 12L21 3" stroke="#a8843a" stroke-width="2.5"/><path d="M7 13L12 9L16 16L11 20Z" fill="#c8b88a"/></svg>
<svg style="left:933.0px;top:219.0px" width="24.0" height="24.0" viewBox="0 0 24 24"><path d="M5 6H20V15H5L1 10.5Z" fill="#f6e05a" stroke="#c9a313" stroke-width="0.9"/><text x="5.5" y="13.5" font-size="7.5" font-weight="bold" font-family="Liberation Sans" fill="#333">abc</text></svg>
<svg style="left:933.0px;top:251.0px" width="24.0" height="24.0" viewBox="0 0 24 24"><path d="M12 1L22 6L12 11L2 6Z" fill="#f08a8a" stroke="#a01818" stroke-width="1"/><path d="M2 6L12 11V22L2 17Z" fill="#8ad040" stroke="#a01818" stroke-width="0.6"/><path d="M22 6L12 11V22L22 17Z" fill="#f5dc3f" stroke="#b89a18" stroke-width="0.6"/></svg>
<svg style="left:933.0px;top:283.0px" width="24.0" height="24.0" viewBox="0 0 24 24"><rect x="8" y="1" width="8" height="6" fill="#e06060"/><path d="M12 7V11M5 11H19M5 11V16M19 11V16M12 11V16" stroke="#e0a020" stroke-width="1.6"/><rect x="1" y="16" width="9" height="7" fill="#f5dc3f"/><rect x="14" y="16" width="9" height="7" fill="#8ab8e8"/></svg>
<svg style="left:933.0px;top:315.0px" width="24.0" height="24.0" viewBox="0 0 24 24"><path d="M3 10C3 5 7 3 12 4V1L17 6L12 10V7C8 6 6 8 6 11Z" fill="#5aa36a"/><path d="M21 14C21 19 17 21 12 20V23L7 18L12 14V17C16 18 18 16 18 13Z" fill="#e8803a"/></svg>
<svg style="left:975.0px;top:340.5px" width="20.0" height="20.0" viewBox="0 0 20 20"><path d="M7 2H13V7H18V13H13V18H7V13H2V7H7Z" fill="#fff" stroke="#3a8a3a" stroke-width="1.3"/></svg>
<svg style="left:1009.0px;top:340.5px" width="20.0" height="20.0" viewBox="0 0 20 20"><rect x="3" y="7" width="14" height="6" rx="1" fill="#fff" stroke="#aaa" stroke-width="1.2"/></svg>
<svg style="left:1043.0px;top:340.5px" width="20.0" height="20.0" viewBox="0 0 20 20"><rect x="5" y="9" width="10" height="9" rx="1" fill="#ccc"/><path d="M7 9V5.5A3 3 0 0 1 13 5.5" fill="none" stroke="#bbb" stroke-width="1.5"/></svg>
<svg style="left:1077.0px;top:340.5px" width="20.0" height="20.0" viewBox="0 0 20 20"><rect x="3" y="3" width="10" height="10" fill="#ddd" stroke="#999" stroke-width="1"/><rect x="6" y="6" width="11" height="11" fill="#eee" stroke="#aaa" stroke-width="1"/></svg>
<svg style="left:1111.0px;top:340.5px" width="20.0" height="20.0" viewBox="0 0 20 20"><path d="M10 3L18 16H2Z" fill="#aaa"/></svg>
<svg style="left:1145.0px;top:340.5px" width="20.0" height="20.0" viewBox="0 0 20 20"><path d="M10 17L18 4H2Z" fill="#aaa"/></svg>
<div class="a" style="left:204px;top:130px;width:717px;height:498px;background:#fff;border:1px solid #b0aca7"></div>
<svg style="left:205px;top:131px" width="715" height="496" viewBox="205 131 715 496"><defs><clipPath id="mc"><rect x="205" y="131" width="715" height="496"/></clipPath></defs><g clip-path="url(#mc)"><path d="M205,128 L205,140 L274.3,153.9 L303.2,172.7 L379.8,165.2 L433.9,166.2 L440,168.2 L456.3,173.2 L457.5,213.3 L475,213.3 L477.5,205.8 L512.4,199.2 L530.8,210 L553.2,210.8 L557.4,198 L765,198.8 L751.3,184.5 L683.5,138 L698.6,128 Z M470,221.6 L474,215.8 L479,214.6 L495,220.8 L503.3,225.8 L507.4,220 L511.6,215 L528.2,214.6 L530.8,218.3 L532.4,233.3 L531.2,244.1 L525.7,251.6 L526.6,263.3 L518.3,273.2 L514,275 L511.6,261.6 L506.6,243.3 L502.4,243.3 L501.6,250 L485.8,246.6 L484,243.3 L486.6,240 L483.3,238.3 L479,245 L474,240 L470,235 Z M536,232 L543,231 L537,247 L541,257 L546,266 L533,266 L531,250 Z M541.6,255.8 L540,246.6 L546.6,225 L566.6,200 L645,201 L641.6,207.5 L628.3,215 L627.5,210 L618,204 L610,210 L605,221.6 L603.3,226.6 L606.6,231.6 L634.2,235 L630.8,243.3 L628.3,240 L610,244.1 L598.3,245 L589.2,240 L585,240 L581.6,245 L571.6,245 L563.2,247.5 L553.2,249.1 L551.6,255 Z M426.6,293.9 L483.5,279.4 L492,272.1 L507.7,274.5 L512.5,281.8 L522.2,275.7 L529.5,269.7 L534.3,267.3 L559.8,283 L552.5,296.3 L540.4,290.3 L522.2,306 L539.2,323 L529.5,332.6 L495.6,343.5 L469,356.9 L432.6,376.2 L420.5,388.3 L416.9,400 L406,412.1 L393.3,407.9 L409.6,383.5 L403.6,378.6 L386,400 L381.8,406 L372.1,410.9 L364.2,408.5 L398.7,364.1 L400,350.8 L402.4,348.4 L398.7,337.5 L403.6,331.4 L397.5,324.2 L404.8,316.9 L406,314.5 Z M443.5,378.6 L481,367.7 L494.4,366.5 L505.3,372.6 L511.3,388.3 L507.7,395.6 L492,399.2 L483.5,394.4 L478.6,405.3 L475,411.5 L484,426.6 L487.1,426 L490.1,432.1 L485.3,439.3 L473.8,443.6 L475,451.5 L459.3,456.9 L454.4,457.9 L451.4,455.7 L447.8,449.6 L438.7,455.1 L433.2,449.6 L444.7,433.9 L449.6,423.6 L442.3,413.9 L444.7,410.9 L438.7,403.6 L438.7,398 L441.1,383.5 Z M507.7,410.9 L519.2,412.1 L518,418.8 L506.5,417.6 Z M382.4,442.4 L392.7,448.4 L387.8,464.2 L380.6,478.7 L369.1,475.1 L375.7,452.1 Z M204,494.3 L207.2,491.7 L208.2,484.8 L213.5,482.2 L214,485.9 L209.8,498.6 L210.3,503.9 L216.7,510.2 L218.8,512.3 L225.2,516.6 L238.9,520.8 L223.6,533.5 L212.5,534.6 L208.2,533.5 L204,532.4 Z M353,306 L357,306.5 L356.5,310 L353,309.5 Z M458,263 L462,258 L465,263 Z M547,308 L549,307 L550,320 L547,320 Z M800,235 L810,238 L830,240 L843,247 L864.2,256.8 L868.7,256 L885.4,253.8 L889.2,256 L896,260.6 L905,265.1 L915.6,271.2 L921,274 L921,276 L908,286 L909.6,293.9 L911,301 L903.5,310.5 L906.6,313.5 L902,321.1 L893,324.1 L891.4,318 L890.7,313.5 L883.9,312 L882.4,304.5 L870.3,301.4 L862.7,295.4 L849,284.8 L843,281 L836,274 L826.6,271 L820,273 L806.6,275 L785.8,261.6 L788.3,253.3 L790,245 Z M916,293 L921,289 L921,309 L916,306 Z M820.5,274 L833,276 L844.5,286.3 L849.8,293.9 L855.1,310.5 L859.7,321.1 L843,321.1 L840.6,348.7 L816,343 L819.4,335 L816.2,329.6 L816.2,307.4 L817,290 Z M921,315 L915.6,316.6 L903.5,327.2 L894.5,337.7 L893.7,350 L895.6,355 L896.7,378.4 L898.8,389 L897.8,398.5 L921,395.3 Z M787.6,308.5 L803.5,307 L816.2,307.4 L816.2,329.6 L819.4,335 L815.2,341.3 L816.2,343.4 L813,356 L816.2,361.4 L814,363.5 L805.6,358.2 L804.6,348.7 L796,345.5 L791.9,344.5 L788.7,331.8 L785.5,317 Z M747.4,323.3 L752.7,321.2 L771.8,326.5 L782.3,333.9 L784.5,344.5 L781.3,348.7 L777,347.6 L771.8,344.5 L754.8,331.8 L747.4,326.5 Z M774,324 L781,324.5 L782,330 L775,328 Z M862.8,329.6 L867,330.7 L860.7,342.4 L852.2,353 L844.8,363.5 L842.7,361.4 L845.9,355 L858.6,336 Z M817.3,360.4 L824.7,359.7 L839.5,360.4 L838.5,362 L824.7,364 L819.4,363.5 Z M891,334 L895.6,326.5 L894,334 Z" fill="#bcbdbb"/><ellipse cx="847" cy="502" rx="11.2" ry="9.3" fill="#bcbdbb"/><path d="M565,224 L577.6,213 L581.8,217 L576,226 L570,230 Z" fill="#fff"/><path d="M579,242 L583,226 L588.7,242 Z" fill="#fff"/><path d="M586,197.6 L591.5,197.6 L589,202.7 Z" fill="#fff"/><path d="M600,197.6 L612.4,197.6 L606,202.7 Z" fill="#fff"/><path d="M618,197.6 L632,197.6 L626,206 Z" fill="#fff"/><path d="M540,252 L547,250 L545,255 Z" fill="#fff"/><path d="M788,255 L806.6,259 L824,255 L838,259 L859.7,271.2 L864.2,274.2 L891.4,288.6 L893,296.9" fill="none" stroke="#fff" stroke-width="1.1"/><path d="M807.5,249 L823.3,255 L838.3,262.5 L859.7,271.2" fill="none" stroke="#fff" stroke-width="1.1"/><path d="M866.5,257.6 L858.9,271.2" fill="none" stroke="#fff" stroke-width="1.1"/><path d="M864.2,275 L862,281" fill="none" stroke="#fff" stroke-width="1.1"/><path d="M865.7,272.7 L874.8,271.2" fill="none" stroke="#fff" stroke-width="1.1"/><path d="M868,276.5 L879.3,276.5 L888.4,266.6 L905,265.9" fill="none" stroke="#fff" stroke-width="1.1"/><path d="M882.4,270.4 L917.2,278" fill="none" stroke="#fff" stroke-width="1.1"/><path d="M905,265 L903.5,275" fill="none" stroke="#fff" stroke-width="1.1"/><path d="M881.6,281 L897.5,281.5 L902,287" fill="none" stroke="#fff" stroke-width="1.1"/><path d="M892.2,295.4 L902,288.6 L911,290.8" fill="none" stroke="#fff" stroke-width="1.1"/><path d="M890,298.4 L892.2,313.5 L890.7,315" fill="none" stroke="#fff" stroke-width="1.1"/><path d="M908,285.5 L921,272.7" fill="none" stroke="#fff" stroke-width="1.1"/><path d="M810,258.3 L816.6,270" fill="none" stroke="#fff" stroke-width="1.1"/><path d="M831.6,263.3 L833.3,270" fill="none" stroke="#fff" stroke-width="1.1"/><path d="M787,320 L805,318 L816,318" fill="none" stroke="#fff" stroke-width="1.1"/><path d="M800,330 L816,328" fill="none" stroke="#fff" stroke-width="1.1"/><path d="M897,363.5 L921,361.4" fill="none" stroke="#fff" stroke-width="1.1"/><circle cx="807.5" cy="246.3" r="4.5" fill="#fff"/><circle cx="807.5" cy="246.3" r="2.8" fill="#a9dbfa" stroke="#1f4ae8" stroke-width="1"/><circle cx="874.7" cy="269.2" r="2" fill="#a9dbfa" stroke="#1f4ae8" stroke-width="0.9"/><path d="M388,193 C388.6,193.2 392.1,194.5 393,195 C393.9,195.5 395.6,197.2 395.5,197.5 C395.4,197.8 392.8,197.7 392,197.5 C391.2,197.3 389.5,196.0 389,195.5 C388.5,195.0 388.1,193.3 388,193" fill="#a9dbfa" stroke="#1f4ae8" stroke-width="1.15" stroke-linejoin="round"/><path d="M389.5,199.5 C389.9,199.6 392.5,199.7 393,200 C393.5,200.3 394.3,201.8 394,202 C393.7,202.2 391.0,202.3 390.5,202 C390.0,201.7 389.6,199.8 389.5,199.5" fill="#a9dbfa" stroke="#1f4ae8" stroke-width="1.15" stroke-linejoin="round"/><path d="M430,223.4 C431.1,222.5 438.8,216.0 439.5,215.9 C440.2,215.8 437.0,221.1 436.2,222.2 C435.4,223.3 433.2,225.3 432.5,225.4 C431.8,225.5 430.3,223.6 430,223.4" fill="#a9dbfa" stroke="#1f4ae8" stroke-width="1.15" stroke-linejoin="round"/><path d="M412.4,245.5 C412.8,244.6 415.1,239.4 416,238 C416.9,236.6 418.8,234.7 420,233.4 C421.2,232.1 425.3,226.9 426.2,226.5 C427.1,226.1 427.6,228.3 427.5,229.7 C427.4,231.1 425.2,236.4 425,238.5 C424.8,240.6 427.1,247.2 425.6,248 C424.1,248.8 413.9,245.8 412.4,245.5" fill="#a9dbfa" stroke="#1f4ae8" stroke-width="1.15" stroke-linejoin="round"/><path d="M409.5,253.6 C410.1,253.1 414.1,249.1 415,249 C415.9,248.9 416.8,251.0 417,252.4 C417.2,253.8 417.2,261.0 416.3,261.1 C415.4,261.2 410.3,254.5 409.5,253.6" fill="#a9dbfa" stroke="#1f4ae8" stroke-width="1.15" stroke-linejoin="round"/><path d="M545,268.5 C545.4,268.4 547.5,267.7 548,268 C548.5,268.3 549.2,270.5 549,271 C548.8,271.5 546.5,272.3 546,272 C545.5,271.7 545.1,268.9 545,268.5" fill="#a9dbfa" stroke="#1f4ae8" stroke-width="1.15" stroke-linejoin="round"/><path d="M602,255.5 C602.4,255.6 604.6,256.1 605,256.5 C605.4,256.9 605.5,258.8 605,259 C604.5,259.2 601.4,258.9 601,258.5 C600.6,258.1 601.9,255.8 602,255.5" fill="#a9dbfa" stroke="#1f4ae8" stroke-width="1.15" stroke-linejoin="round"/><path d="M682,232 C682.5,232.5 685.3,234.7 686,236 C686.7,237.3 688.2,241.9 688,243 C687.8,244.1 684.7,245.3 684,245 C683.3,244.7 682.2,241.5 682,240 C681.8,238.5 682.0,232.9 682,232" fill="#a9dbfa" stroke="#1f4ae8" stroke-width="1.15" stroke-linejoin="round"/><path d="M609,315 C609.5,315.8 612.4,320.6 613,322 C613.6,323.4 614.5,326.4 614,327 C613.5,327.6 609.7,327.6 609,327 C608.3,326.4 608.0,323.4 608,322 C608.0,320.6 608.9,315.8 609,315" fill="#a9dbfa" stroke="#1f4ae8" stroke-width="1.15" stroke-linejoin="round"/><path d="M704,335 C705.2,334.3 712.4,329.6 714,329 C715.6,328.4 717.3,329.5 718,330 C718.7,330.5 720.7,332.2 720,333 C719.3,333.8 713.6,336.5 712,337 C710.4,337.5 706.9,337.2 706,337 C705.1,336.8 704.2,335.2 704,335" fill="#a9dbfa" stroke="#1f4ae8" stroke-width="1.15" stroke-linejoin="round"/><path d="M822.5,271.6 C823.7,271.8 830.1,272.3 832.5,273 C834.9,273.7 842.4,276.3 843.3,277.5 C844.2,278.7 841.8,282.5 840,283.3 C838.2,284.1 829.1,284.5 827.5,284.1 C825.9,283.7 827.2,281.5 826.6,280 C826.0,278.5 823.0,272.6 822.5,271.6" fill="#a9dbfa" stroke="#1f4ae8" stroke-width="1.15" stroke-linejoin="round"/><path d="M780,310 C780.4,309.8 782.4,308.4 783,308.5 C783.6,308.6 784.9,310.0 785,310.5 C785.1,311.0 784.6,312.8 784,313 C783.4,313.2 780.5,312.9 780,312.5 C779.5,312.1 780.0,310.3 780,310" fill="#a9dbfa" stroke="#1f4ae8" stroke-width="1.15" stroke-linejoin="round"/><path d="M782.4,321.2 C783.1,321.9 788.5,326.4 788.7,327.5 C788.9,328.6 785.2,331.0 784.5,330.3 C783.8,329.6 782.6,322.3 782.4,321.2" fill="#a9dbfa" stroke="#1f4ae8" stroke-width="1.15" stroke-linejoin="round"/><path d="M787.6,342.4 C788.1,343.1 791.4,347.2 791.9,348.7 C792.4,350.2 793.0,355.3 791.9,355.5 C790.8,355.7 783.1,351.8 782.4,350.8 C781.7,349.8 784.9,347.6 785.5,346.6 C786.1,345.6 787.4,342.9 787.6,342.4" fill="#a9dbfa" stroke="#1f4ae8" stroke-width="1.15" stroke-linejoin="round"/><path d="M830,380 C830.9,380.2 836.4,381.1 838,381.5 C839.6,381.9 843.3,383.0 843.8,383.5 C844.3,384.0 843.0,385.6 842,385.8 C841.0,386.0 836.3,385.9 835,385.5 C833.7,385.1 831.6,383.1 831,382.5 C830.4,381.9 830.1,380.3 830,380" fill="#a9dbfa" stroke="#1f4ae8" stroke-width="1.15" stroke-linejoin="round"/><path d="M866.6,390 C867.0,390.4 868.9,392.9 870,393 C871.1,393.1 875.0,391.0 876,391 C877.0,391.0 878.9,392.5 878.7,393 C878.5,393.5 875.1,395.3 874,395.5 C872.9,395.7 869.9,395.1 869,394.5 C868.1,393.9 866.9,390.5 866.6,390" fill="#a9dbfa" stroke="#1f4ae8" stroke-width="1.15" stroke-linejoin="round"/><path d="M919,372 C919.2,372.0 920.8,371.3 921,372 C921.2,372.7 921.2,377.8 921,378.4 C920.8,379.0 919.2,377.7 919,377 C918.8,376.3 919.0,372.6 919,372" fill="#a9dbfa" stroke="#1f4ae8" stroke-width="1.15" stroke-linejoin="round"/><circle cx="439.5" cy="285.5" r="1.6" fill="#a9dbfa" stroke="#1f4ae8" stroke-width="0.9"/><circle cx="453.8" cy="275.7" r="1.1" fill="#a9dbfa" stroke="#1f4ae8" stroke-width="0.9"/><circle cx="599.5" cy="247.5" r="1.3" fill="#a9dbfa" stroke="#1f4ae8" stroke-width="0.9"/><circle cx="720" cy="314.4" r="1.2" fill="#a9dbfa" stroke="#1f4ae8" stroke-width="0.9"/><circle cx="845.9" cy="411.8" r="1.5" fill="#a9dbfa" stroke="#1f4ae8" stroke-width="0.9"/><circle cx="866.6" cy="418.2" r="1.2" fill="#a9dbfa" stroke="#1f4ae8" stroke-width="0.9"/><circle cx="883.4" cy="425" r="1.6" fill="#a9dbfa" stroke="#1f4ae8" stroke-width="0.9"/><circle cx="842.7" cy="432.4" r="1.8" fill="#a9dbfa" stroke="#1f4ae8" stroke-width="0.9"/><path d="M358,194.6 C357.3,196.0 354.8,199.9 354,203 C353.2,206.1 353.5,210.0 353.5,213.4 C353.5,216.8 354.6,220.2 354,223.5 C353.4,226.8 351.5,229.9 350,233.5 C348.5,237.1 346.0,241.5 345,244.8 C344.0,248.2 344.7,250.2 344,253.6 C343.3,257.0 341.2,260.8 341,265 C340.8,269.2 342.2,275.5 343,278.8 C343.8,282.1 345.0,283.1 346,285 C347.0,286.9 348.4,287.9 349.1,290 C349.9,292.1 351.7,293.7 350.5,297.5 C349.3,301.3 343.8,308.9 342,312.6 C340.2,316.4 340.6,315.8 339.6,320 C338.6,324.2 337.7,332.2 335.8,337.7 C333.9,343.2 329.4,345.7 328.3,352.8 C327.2,359.9 328.4,375.2 329.5,380.4 C330.6,385.6 333.1,381.7 334.6,384.2 C336.1,386.7 336.8,391.0 338.3,395.4 C339.8,399.8 342.3,406.7 343.4,410.5 C344.4,414.3 344.0,415.5 344.6,418 C345.2,420.5 345.2,424.3 347.1,425.6 C349.0,426.9 353.5,424.4 356,425.6 C358.5,426.9 361.4,430.6 362.2,433.1 C363.0,435.6 360.6,438.2 361,440.6 C361.4,443.0 364.1,445.4 364.8,447.5 C365.5,449.6 365.8,450.5 365.2,453 C364.6,455.5 362.8,459.7 361.2,462.7 C359.6,465.7 358.0,469.0 355.8,471.2 C353.6,473.4 349.6,473.9 347.8,476 C346.0,478.1 346.2,481.3 345.2,484 C344.2,486.7 342.4,489.8 342,492 C341.6,494.2 344.0,495.1 342.5,497.3 C341.0,499.5 335.0,503.1 333.2,505.3 C331.4,507.5 331.8,506.2 331.9,510.6 C332.0,515.0 334.8,527.5 333.7,531.9 C332.6,536.3 328.6,533.6 325.2,537.2 C321.8,540.9 313.9,549.3 313.2,553.8 C312.5,558.2 319.6,560.4 321.2,563.9 C322.8,567.4 323.0,570.7 323,574.5 C323.0,578.3 322.6,582.0 321.2,586.5 C319.8,591.0 316.3,596.5 314.5,601.2 C312.7,605.9 311.0,610.0 310.6,614.5 C310.2,619.0 311.7,625.8 311.9,628" fill="none" stroke="#2a52dc" stroke-width="1.45" stroke-linejoin="round" stroke-linecap="round"/><path d="M204,306.3 C207.3,306.9 217.7,308.1 224,310 C230.3,311.9 235.8,316.0 241.7,317.6 C247.6,319.2 252.1,319.0 259.2,319.6 C266.3,320.2 278.0,320.0 284.3,321.4 C290.6,322.8 293.8,325.2 296.9,327.7 C300.0,330.2 302.3,333.9 303.2,336.4 C304.1,338.9 301.4,340.4 302,342.7 C302.6,345.0 305.1,346.8 307,350.3 C308.9,353.9 312.1,359.0 313.3,364 C314.6,369.0 313.5,376.2 314.5,380.4 C315.5,384.6 316.6,384.8 319.5,389.2 C322.4,393.6 328.2,403.3 332,406.8 C335.8,410.3 340.1,409.4 342,410 C343.9,410.6 343.2,410.4 343.4,410.5" fill="none" stroke="#2a52dc" stroke-width="1.45" stroke-linejoin="round" stroke-linecap="round"/><path d="M531.6,213.3 C532.3,215.0 535.0,220.2 535.7,223.3 C536.4,226.4 536.4,229.8 536,231.6 C535.6,233.4 533.9,232.6 533.6,234.1 C533.3,235.6 534.6,238.7 534.1,240.8 C533.6,242.9 532.2,244.8 530.8,246.6 C529.4,248.4 526.3,249.9 525.7,251.6 C525.1,253.3 527.3,254.9 527.4,256.6 C527.5,258.3 526.2,260.1 526.2,261.6 C526.2,263.1 528.0,264.6 527.4,265.8 C526.8,267.0 523.5,267.5 522.4,269 C521.3,270.5 521.2,273.5 520.8,275 C520.4,276.5 522.0,276.1 519.8,278.2 C517.6,280.3 510.9,285.2 507.7,287.8 C504.5,290.4 503.4,291.3 500.4,293.9 C497.4,296.5 491.5,300.8 489.5,303.6 C487.5,306.4 489.5,308.6 488.3,310.8 C487.1,313.0 484.7,314.7 482.3,316.9 C479.9,319.1 475.8,322.2 473.8,324.2 C471.8,326.2 472.6,326.0 470.2,329 C467.8,332.0 462.7,338.1 459.3,342.3 C455.9,346.5 453.2,350.4 449.6,354.4 C446.0,358.4 440.7,364.5 437.5,366.5 C434.3,368.5 432.2,365.5 430.2,366.5 C428.2,367.5 427.4,370.8 425.4,372.6 C423.4,374.4 420.5,375.2 418.1,377.4 C415.7,379.6 414.0,382.5 410.8,385.9 C407.6,389.3 401.5,395.4 398.7,398 C395.9,400.6 395.9,400.6 393.9,401.6 C391.9,402.6 388.2,402.5 386.6,404.1 C385.0,405.7 384.9,408.7 384.2,411.3 C383.5,413.9 382.7,417.4 382.3,420 C381.9,422.6 382.4,425.2 381.8,426.6 C381.2,428.0 379.3,427.5 378.8,428.5 C378.3,429.5 379.3,431.2 378.8,432.7 C378.3,434.2 378.0,435.0 375.7,437.5 C373.4,440.0 366.6,446.1 364.8,447.8" fill="none" stroke="#2a52dc" stroke-width="1.45" stroke-linejoin="round" stroke-linecap="round"/><path d="M468,226.6 C468.3,228.6 468.7,235.1 470,238.3 C471.3,241.5 471.4,240.7 475.8,245.8 C480.2,250.9 492.7,264.1 496.6,269 C500.5,273.9 497.1,272.1 499,275 C500.9,277.9 506.6,284.4 508.3,286.6 C510.0,288.8 509.0,287.8 509.1,288" fill="none" stroke="#2a52dc" stroke-width="1.45" stroke-linejoin="round" stroke-linecap="round"/><path d="M204,577.2 C207.6,578.5 219.5,583.0 225.3,585.2 C231.1,587.4 232.4,588.5 238.6,590.5 C244.8,592.5 257.1,596.8 262.6,597.2 C268.2,597.7 269.8,596.5 271.9,593.2 C274.0,589.9 275.8,582.1 275.4,577.2 C275.0,572.3 270.8,568.8 269.3,563.9 C267.8,559.0 266.6,551.0 266.6,547.9 C266.6,544.8 265.8,545.9 269.3,545.2 C272.9,544.5 281.9,543.5 287.9,543.9 C293.9,544.3 301.0,546.2 305.2,547.9 C309.4,549.5 311.9,552.8 313.2,553.8" fill="none" stroke="#2a52dc" stroke-width="1.45" stroke-linejoin="round" stroke-linecap="round"/><path d="M374.5,628 C379.2,624.4 397.4,611.9 402.5,606.5 C407.6,601.1 404.4,599.3 405.1,595.8 C405.8,592.2 404.9,589.9 406.5,585.2 C408.1,580.6 411.8,571.0 414.4,567.9 C417.0,564.8 419.3,564.3 422.4,566.5 C425.5,568.7 429.6,578.7 433.1,581.2 C436.7,583.7 440.1,581.8 443.7,581.7 C447.3,581.6 450.6,580.7 454.7,580.7 C458.8,580.7 460.9,580.3 468,581.7 C475.1,583.1 491.1,587.5 497.3,589.2 C503.5,590.9 503.2,590.5 505.3,591.8 C507.4,593.1 509.1,595.2 509.8,597.2 C510.5,599.2 513.2,599.8 509.3,603.8 C505.4,607.8 490.8,617.2 486.6,621.2 C482.4,625.2 484.4,626.9 484,628" fill="none" stroke="#2a52dc" stroke-width="1.45" stroke-linejoin="round" stroke-linecap="round"/></g></svg>
</body></html>
